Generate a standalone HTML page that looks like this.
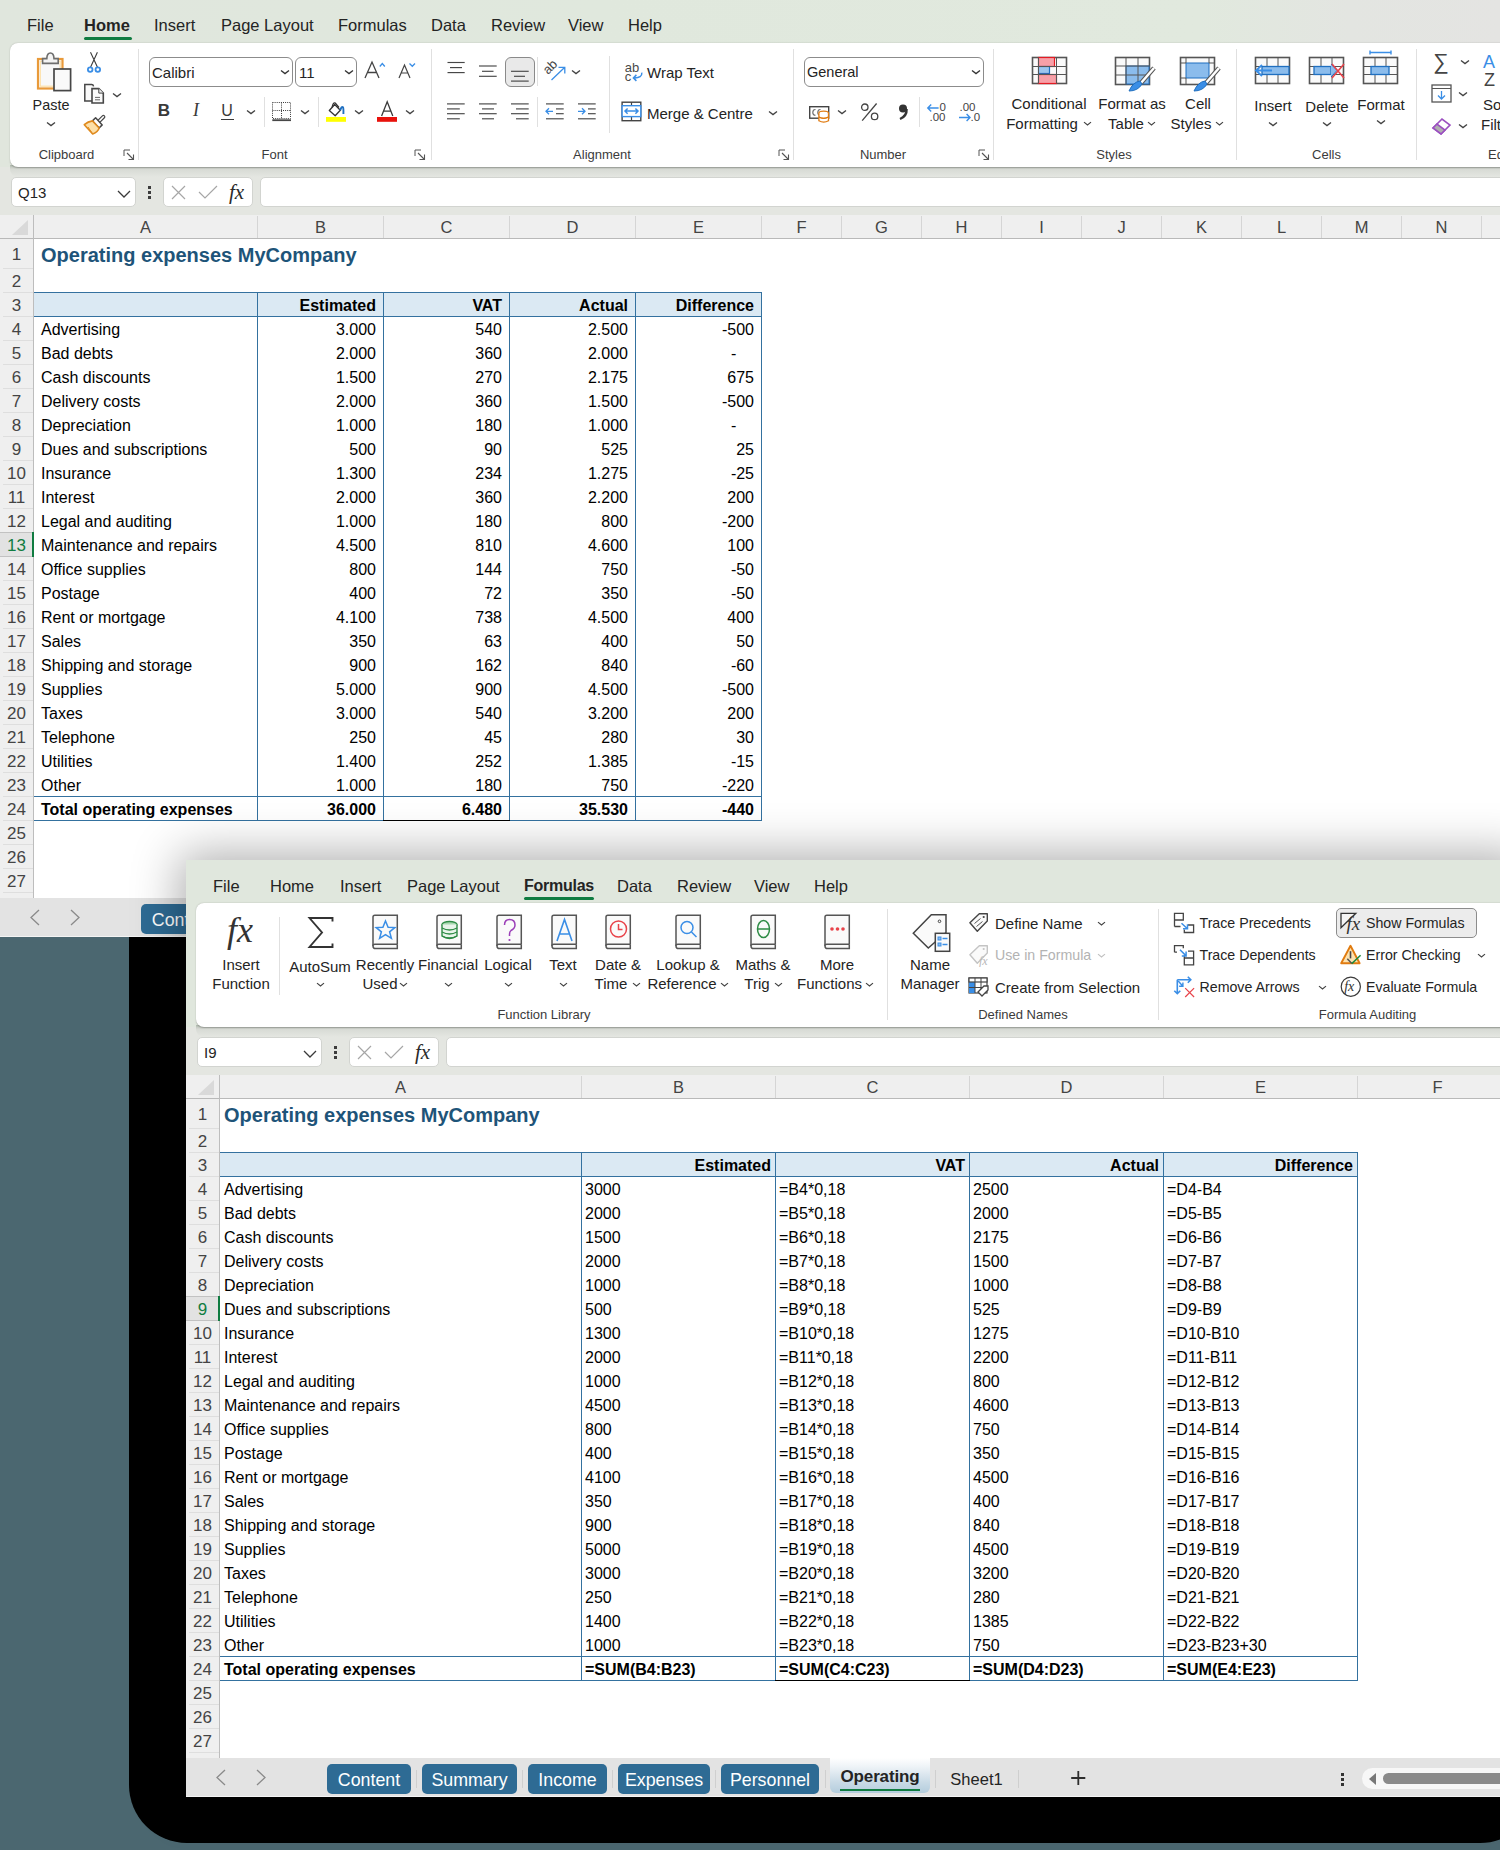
<!DOCTYPE html>
<html><head><meta charset="utf-8"><style>
html,body{margin:0;padding:0}
body{width:1500px;height:1850px;position:relative;overflow:hidden;background:#4b6770;font-family:"Liberation Sans", sans-serif}
.w{position:absolute;overflow:hidden}
</style></head><body>
<div style="position:absolute;left:129px;top:700px;width:1409px;height:1143px;background:#000;border-radius:0 0 58px 58px"></div>
<div class="w" style="left:0;top:0;width:1500px;height:937px"><div style="position:absolute;left:0px;top:0px;width:1500px;height:167px;background:linear-gradient(90deg,#e0e6dd 0%,#e0e8dd 40%,#e1e9de 80%,#e3e5e1 90%,#e4e4e2 100%)"></div><div style="position:absolute;left:0px;top:167px;width:1600px;height:48px;background:#e4e6e1"></div><div style="position:absolute;left:27px;top:13.50px;height:23px;line-height:23px;font-size:16.5px;font-weight:400;color:#242424;white-space:nowrap;">File</div><div style="position:absolute;left:84px;top:13.50px;height:23px;line-height:23px;font-size:16.5px;font-weight:700;color:#242424;white-space:nowrap;letter-spacing:0;">Home</div><div style="position:absolute;left:84px;top:37px;width:48px;height:3px;background:#107c41;border-radius:1.5px"></div><div style="position:absolute;left:154px;top:13.50px;height:23px;line-height:23px;font-size:16.5px;font-weight:400;color:#242424;white-space:nowrap;">Insert</div><div style="position:absolute;left:221px;top:13.50px;height:23px;line-height:23px;font-size:16.5px;font-weight:400;color:#242424;white-space:nowrap;">Page Layout</div><div style="position:absolute;left:338px;top:13.50px;height:23px;line-height:23px;font-size:16.5px;font-weight:400;color:#242424;white-space:nowrap;">Formulas</div><div style="position:absolute;left:431px;top:13.50px;height:23px;line-height:23px;font-size:16.5px;font-weight:400;color:#242424;white-space:nowrap;">Data</div><div style="position:absolute;left:491px;top:13.50px;height:23px;line-height:23px;font-size:16.5px;font-weight:400;color:#242424;white-space:nowrap;">Review</div><div style="position:absolute;left:568px;top:13.50px;height:23px;line-height:23px;font-size:16.5px;font-weight:400;color:#242424;white-space:nowrap;">View</div><div style="position:absolute;left:628px;top:13.50px;height:23px;line-height:23px;font-size:16.5px;font-weight:400;color:#242424;white-space:nowrap;">Help</div><div style="position:absolute;left:10px;top:165px;width:1600px;height:12px;background:linear-gradient(rgba(120,130,118,0.45),rgba(160,168,158,0.18) 35%,rgba(200,205,198,0) 100%);border-radius:0 0 0 8px"></div><div style="position:absolute;left:10px;top:43px;width:1600px;height:124px;background:#fff;border-radius:8px;box-shadow:0 0.5px 1.5px rgba(0,0,0,0.25)"></div><svg style="position:absolute;left:30px;top:48px" width="100" height="92" viewBox="0 0 100 92" fill="none"><rect x="8" y="11" width="24.5" height="29.5" fill="#f8f8f8" stroke="#e99a3a" stroke-width="2.2"/><rect x="10.3" y="13.3" width="19.9" height="24.9" fill="none" stroke="#fde0a8" stroke-width="1.2"/><path d="M12.6 15.4 V10.6 H16.8 Q17 5 20.4 5 Q23.8 5 24 10.6 H28.2 V15.4 Z" fill="#f3f3f3" stroke="#6e6e6e" stroke-width="1.6"/><rect x="24" y="21" width="16.6" height="21.6" fill="#fafafa" stroke="#474747" stroke-width="1.7"/><path d="M60.5 4.3 L67.6 19.6 M67.4 4.3 L60.4 19.6" stroke="#3c3c3c" stroke-width="1.1"/><circle cx="60.2" cy="21.6" r="2.3" stroke="#3a8ee6" stroke-width="1.8"/><circle cx="67.8" cy="21.6" r="2.3" stroke="#3a8ee6" stroke-width="1.8"/><path d="M62 53 H54.8 V36.6 H61.6 Q63.2 36.6 63.6 38.4" fill="#fafafa" stroke="#474747" stroke-width="1.5"/><path d="M62 55 V40.6 H68.8 L73.3 45.1 V55 Z" fill="#fafafa" stroke="#474747" stroke-width="1.6"/><path d="M68.8 40.6 V45.1 H73.3" stroke="#474747" stroke-width="1" fill="#eee"/><path d="M65 49.4 H70 M65 51.8 H70" stroke="#666" stroke-width="1"/><path d="M68.6 73.6 L73.4 68.8" stroke="#474747" stroke-width="4" stroke-linecap="round"/><path d="M68.6 73.6 L73.4 68.8" stroke="#fff" stroke-width="1.6" stroke-linecap="round"/><path d="M62.5 72.9 L65.6 69.8 L72.2 76.9 L69.1 80 Z" fill="#fff" stroke="#474747" stroke-width="1.5" stroke-linejoin="round"/><path d="M54.3 76.7 Q58 73.6 62.5 72.9 L69.1 80 Q68 84 62.7 86 Z" fill="#fde0a8" stroke="#e08a1e" stroke-width="1.6" stroke-linejoin="round"/><path d="M58 79 L62.7 86" stroke="#e08a1e" stroke-width="1"/></svg><div style="position:absolute;left:-249px;width:600px;text-align:center;top:94.50px;height:20px;line-height:20px;font-size:14.4px;font-weight:400;color:#242424;white-space:nowrap;">Paste</div><svg style="position:absolute;left:45.5px;top:119.5px" width="10" height="8" viewBox="0 0 10 8" fill="none" stroke-linecap="butt"><path d="M1 2.4 L5 5.6 L9 2.4" stroke="#424242" stroke-width="1.3"/></svg><svg style="position:absolute;left:112px;top:90.5px" width="10" height="8" viewBox="0 0 10 8" fill="none" stroke-linecap="butt"><path d="M1 2.4 L5 5.6 L9 2.4" stroke="#424242" stroke-width="1.3"/></svg><div style="position:absolute;left:-233.5px;width:600px;text-align:center;top:145.50px;height:18px;line-height:18px;font-size:13px;font-weight:400;color:#3b3b3b;white-space:nowrap;">Clipboard</div><svg style="position:absolute;left:123px;top:149px" width="12" height="12" viewBox="0 0 12 12" fill="none" stroke-linecap="butt"><path d="M1 7 V1 H7" stroke="#555" stroke-width="1"/><path d="M4 4 L10.5 10.5 M10.5 5.5 V10.5 H5.5" stroke="#555" stroke-width="1.1"/></svg><div style="position:absolute;left:138px;top:49px;width:1px;height:111px;background:#e0e0e0"></div><div style="position:absolute;left:149px;top:57px;width:144px;height:30px;border:1px solid #8c8c8c;border-radius:6px;box-sizing:border-box;background:#fff"></div><div style="position:absolute;left:152px;top:61.50px;height:21px;line-height:21px;font-size:15px;font-weight:400;color:#242424;white-space:nowrap;">Calibri</div><svg style="position:absolute;left:280px;top:68px" width="10" height="8" viewBox="0 0 10 8" fill="none" stroke-linecap="butt"><path d="M1 2.4 L5 5.6 L9 2.4" stroke="#333" stroke-width="1.3"/></svg><div style="position:absolute;left:295px;top:57px;width:62px;height:30px;border:1px solid #8c8c8c;border-radius:6px;box-sizing:border-box;background:#fff"></div><div style="position:absolute;left:299px;top:61.50px;height:21px;line-height:21px;font-size:15px;font-weight:400;color:#242424;white-space:nowrap;">11</div><svg style="position:absolute;left:344px;top:68px" width="10" height="8" viewBox="0 0 10 8" fill="none" stroke-linecap="butt"><path d="M1 2.4 L5 5.6 L9 2.4" stroke="#333" stroke-width="1.3"/></svg><svg style="position:absolute;left:360px;top:58px" width="60" height="24" viewBox="0 0 60 24" fill="none" stroke-linecap="butt"><path d="M5 20 L12 4 L19 20 M7.6 14.5 H16.4" stroke="#444" stroke-width="1.3" fill="none"/><path d="M19.8 8.5 L22.3 5.5 L24.8 8.5" stroke="#3a8ee6" stroke-width="1.3" fill="none"/><path d="M39 20 L44.5 7 L50 20 M41 15 H48" stroke="#444" stroke-width="1.2" fill="none"/><path d="M49.5 5.5 L52.3 8.3 L55 5.5" stroke="#3a8ee6" stroke-width="1.3" fill="none"/></svg><div style="position:absolute;left:-136px;width:600px;text-align:center;top:99.00px;height:23px;line-height:23px;font-size:17px;font-weight:700;color:#3a3a3a;white-space:nowrap;">B</div><div style="position:absolute;left:-104px;width:600px;text-align:center;top:98.00px;height:25px;line-height:25px;font-size:18px;font-weight:400;color:#3a3a3a;white-space:nowrap;font-family:'Liberation Serif',serif;font-style:italic;">I</div><div style="position:absolute;left:-73px;width:600px;text-align:center;top:100.00px;height:22px;line-height:22px;font-size:16px;font-weight:400;color:#3a3a3a;white-space:nowrap;">U</div><div style="position:absolute;left:221px;top:119px;width:13px;height:1.3px;background:#3a3a3a"></div><svg style="position:absolute;left:246px;top:108px" width="10" height="8" viewBox="0 0 10 8" fill="none" stroke-linecap="butt"><path d="M1 2.4 L5 5.6 L9 2.4" stroke="#424242" stroke-width="1.3"/></svg><div style="position:absolute;left:264px;top:97px;width:1px;height:30px;background:#e0e0e0"></div><svg style="position:absolute;left:272px;top:102px" width="20" height="20" viewBox="0 0 20 20" fill="none" stroke-linecap="butt"><path d="M0.5 0.5 H18.5 V16.5 H0.5 Z M9.5 0.5 V16.5 M0.5 8.5 H18.5" stroke="#3a3a3a" stroke-width="1" stroke-dasharray="1 1.1"/><path d="M0.3 18.2 H19" stroke="#474747" stroke-width="1.8"/></svg><svg style="position:absolute;left:300px;top:108px" width="10" height="8" viewBox="0 0 10 8" fill="none" stroke-linecap="butt"><path d="M1 2.4 L5 5.6 L9 2.4" stroke="#424242" stroke-width="1.3"/></svg><div style="position:absolute;left:318px;top:97px;width:1px;height:30px;background:#e0e0e0"></div><svg style="position:absolute;left:325px;top:100px" width="24" height="24" viewBox="0 0 24 24" fill="none" stroke-linecap="butt"><path d="M4.3 10.5 L9.7 4.5 L15.3 10.3 L10.2 15.8 Z" fill="#fff" stroke="#333" stroke-width="1.3" stroke-linejoin="round"/><path d="M7 7.5 Q8 1.8 10.3 3 L14 7.5" stroke="#333" stroke-width="1.2" fill="none"/><path d="M15.3 10.3 Q16.5 6 18 7.2 Q18.6 8 18.4 14" stroke="#1f6fc0" stroke-width="1.9" fill="none"/><rect x="1" y="17" width="20" height="4.8" fill="#ffff00"/></svg><svg style="position:absolute;left:354px;top:108px" width="10" height="8" viewBox="0 0 10 8" fill="none" stroke-linecap="butt"><path d="M1 2.4 L5 5.6 L9 2.4" stroke="#424242" stroke-width="1.3"/></svg><svg style="position:absolute;left:376px;top:100px" width="22" height="23" viewBox="0 0 22 23" fill="none" stroke-linecap="butt"><path d="M5.6 16 L11.2 1.8 L16.8 16 M7.6 11.2 H14.8" stroke="#3a3a3a" stroke-width="1.3" fill="none"/><rect x="1" y="17" width="20" height="4.8" fill="#e8120c"/></svg><svg style="position:absolute;left:405px;top:108px" width="10" height="8" viewBox="0 0 10 8" fill="none" stroke-linecap="butt"><path d="M1 2.4 L5 5.6 L9 2.4" stroke="#424242" stroke-width="1.3"/></svg><div style="position:absolute;left:-25.5px;width:600px;text-align:center;top:145.50px;height:18px;line-height:18px;font-size:13px;font-weight:400;color:#3b3b3b;white-space:nowrap;">Font</div><svg style="position:absolute;left:414px;top:149px" width="12" height="12" viewBox="0 0 12 12" fill="none" stroke-linecap="butt"><path d="M1 7 V1 H7" stroke="#555" stroke-width="1"/><path d="M4 4 L10.5 10.5 M10.5 5.5 V10.5 H5.5" stroke="#555" stroke-width="1.1"/></svg><div style="position:absolute;left:431px;top:49px;width:1px;height:111px;background:#e0e0e0"></div><svg style="position:absolute;left:440px;top:55px" width="160" height="75" viewBox="0 0 160 75" fill="none"><path d="M7.5 7.5 H24.7" stroke="#474747" stroke-width="1.15"/><path d="M10.0 12.6 H22.0" stroke="#474747" stroke-width="1.15"/><path d="M7.5 17.6 H24.7" stroke="#474747" stroke-width="1.15"/><path d="M39.0 11.0 H56.7" stroke="#474747" stroke-width="1.15"/><path d="M42.0 16.3 H53.5" stroke="#474747" stroke-width="1.15"/><path d="M39.0 21.3 H56.7" stroke="#474747" stroke-width="1.15"/><path d="M71.0 16.3 H88.7" stroke="#474747" stroke-width="1.15"/><path d="M74.0 21.3 H85.0" stroke="#474747" stroke-width="1.15"/><path d="M71.0 26.1 H88.7" stroke="#474747" stroke-width="1.15"/><path d="M7.0 48.9 H24.7" stroke="#474747" stroke-width="1.15"/><path d="M7.0 53.9 H19.8" stroke="#474747" stroke-width="1.15"/><path d="M7.0 58.7 H24.7" stroke="#474747" stroke-width="1.15"/><path d="M7.0 63.8 H19.8" stroke="#474747" stroke-width="1.15"/><path d="M39.0 48.9 H56.7" stroke="#474747" stroke-width="1.15"/><path d="M42.0 53.9 H54.0" stroke="#474747" stroke-width="1.15"/><path d="M39.0 58.7 H56.7" stroke="#474747" stroke-width="1.15"/><path d="M42.0 63.8 H54.0" stroke="#474747" stroke-width="1.15"/><path d="M71.0 48.9 H88.7" stroke="#474747" stroke-width="1.15"/><path d="M76.0 53.9 H88.7" stroke="#474747" stroke-width="1.15"/><path d="M71.0 58.7 H88.7" stroke="#474747" stroke-width="1.15"/><path d="M76.0 63.8 H88.7" stroke="#474747" stroke-width="1.15"/><path d="M106.0 48.9 H123.7" stroke="#474747" stroke-width="1.15"/><path d="M116.0 53.9 H123.7" stroke="#474747" stroke-width="1.15"/><path d="M116.0 58.7 H123.7" stroke="#474747" stroke-width="1.15"/><path d="M106.0 63.8 H123.7" stroke="#474747" stroke-width="1.15"/><path d="M138.0 48.9 H155.7" stroke="#474747" stroke-width="1.15"/><path d="M148.0 53.9 H155.7" stroke="#474747" stroke-width="1.15"/><path d="M148.0 58.7 H155.7" stroke="#474747" stroke-width="1.15"/><path d="M138.0 63.8 H155.7" stroke="#474747" stroke-width="1.15"/><path d="M113 56.3 H106 M109 53.3 L106 56.3 L109 59.3" stroke="#3a8ee6" stroke-width="1.3" fill="none"/><path d="M138 56.3 H145 M142 53.3 L145 56.3 L142 59.3" stroke="#3a8ee6" stroke-width="1.3" fill="none"/><text x="0" y="0" font-family="Liberation Sans" font-size="13" fill="#474747" transform="translate(108 20) rotate(-45)">ab</text><path d="M111.5 25 L124.8 12.3 M118.5 12.3 H124.8 V18.6" stroke="#3a8ee6" stroke-width="1.3" fill="none"/></svg><div style="position:absolute;left:505px;top:57px;width:30px;height:30px;background:#e9e9e9;border:1px solid #8a8a8a;border-radius:6px;box-sizing:border-box"></div><svg style="position:absolute;left:440px;top:55px" width="160" height="75" viewBox="0 0 160 75" fill="none"><path d="M71.0 16.3 H88.7" stroke="#474747" stroke-width="1.15"/><path d="M74.0 21.3 H85.0" stroke="#474747" stroke-width="1.15"/><path d="M71.0 26.1 H88.7" stroke="#474747" stroke-width="1.15"/></svg><div style="position:absolute;left:537px;top:57px;width:1px;height:29px;background:#e0e0e0"></div><svg style="position:absolute;left:571px;top:68px" width="10" height="8" viewBox="0 0 10 8" fill="none" stroke-linecap="butt"><path d="M1 2.4 L5 5.6 L9 2.4" stroke="#424242" stroke-width="1.3"/></svg><div style="position:absolute;left:537px;top:97px;width:1px;height:30px;background:#e0e0e0"></div><div style="position:absolute;left:609px;top:56px;width:1px;height:77px;background:#e0e0e0"></div><svg style="position:absolute;left:620px;top:58px" width="24" height="26" viewBox="0 0 24 26" fill="none" stroke-linecap="butt"><text x="4.8" y="14" font-family="Liberation Sans" font-size="13" fill="#4a4a4a">ab</text><text x="4.8" y="23.3" font-family="Liberation Sans" font-size="13" fill="#4a4a4a">c</text><path d="M21.8 14.6 Q22.4 20.2 13.8 19.9 M16.4 16.9 L13.4 19.9 L16.4 22.9" stroke="#3a8ee6" stroke-width="1.5" fill="none"/></svg><div style="position:absolute;left:647px;top:62.00px;height:21px;line-height:21px;font-size:15px;font-weight:400;color:#242424;white-space:nowrap;">Wrap Text</div><svg style="position:absolute;left:620px;top:100px" width="23" height="23" viewBox="0 0 23 23" fill="none" stroke-linecap="butt"><rect x="2.1" y="2.2" width="18.7" height="18.5" stroke="#444" stroke-width="1.4" fill="#fff"/><path d="M11.5 2.2 V5.7 M11.5 16.6 V20.7" stroke="#444" stroke-width="1.2"/><rect x="2.1" y="5.7" width="18.7" height="10.9" stroke="#3a8ee6" stroke-width="1.4" fill="#fff"/><path d="M5 11.1 H18 M7.6 8.5 L5 11.1 L7.6 13.7 M15.4 8.5 L18 11.1 L15.4 13.7" stroke="#3a8ee6" stroke-width="1.5" fill="none"/></svg><div style="position:absolute;left:647px;top:102.50px;height:21px;line-height:21px;font-size:15px;font-weight:400;color:#242424;white-space:nowrap;">Merge &amp; Centre</div><svg style="position:absolute;left:767.5px;top:109px" width="10" height="8" viewBox="0 0 10 8" fill="none" stroke-linecap="butt"><path d="M1 2.4 L5 5.6 L9 2.4" stroke="#424242" stroke-width="1.3"/></svg><div style="position:absolute;left:302px;width:600px;text-align:center;top:145.50px;height:18px;line-height:18px;font-size:13px;font-weight:400;color:#3b3b3b;white-space:nowrap;">Alignment</div><svg style="position:absolute;left:778px;top:149px" width="12" height="12" viewBox="0 0 12 12" fill="none" stroke-linecap="butt"><path d="M1 7 V1 H7" stroke="#555" stroke-width="1"/><path d="M4 4 L10.5 10.5 M10.5 5.5 V10.5 H5.5" stroke="#555" stroke-width="1.1"/></svg><div style="position:absolute;left:793px;top:49px;width:1px;height:111px;background:#e0e0e0"></div><div style="position:absolute;left:804px;top:57px;width:180px;height:30px;border:1px solid #8c8c8c;border-radius:6px;box-sizing:border-box;background:#fff"></div><div style="position:absolute;left:807px;top:62.00px;height:20px;line-height:20px;font-size:14.5px;font-weight:400;color:#242424;white-space:nowrap;">General</div><svg style="position:absolute;left:971px;top:68px" width="10" height="8" viewBox="0 0 10 8" fill="none" stroke-linecap="butt"><path d="M1 2.4 L5 5.6 L9 2.4" stroke="#333" stroke-width="1.3"/></svg><svg style="position:absolute;left:806px;top:101px" width="26" height="24" viewBox="0 0 26 24" fill="none" stroke-linecap="butt"><rect x="3.7" y="5.7" width="19" height="11.5" stroke="#444" stroke-width="1.4" fill="#fff"/><path d="M9.5 8.5 Q6.8 8.5 6.8 11.4 Q6.8 14.3 9.5 14.3 M14.5 8.5 Q11.8 8.5 11.8 11.4 Q11.8 14.3 14.5 14.3" stroke="#666" stroke-width="1.1" fill="none"/><ellipse cx="17.7" cy="12.2" rx="4.8" ry="2" fill="#fff" stroke="#e07b10" stroke-width="1.3"/><path d="M12.9 12.2 V19.8 Q17.7 22.4 22.5 19.8 V12.2 M12.9 16 Q17.7 18.6 22.5 16" stroke="#e07b10" stroke-width="1.3" fill="#fff"/><path d="M12.9 16 Q17.7 18.6 22.5 16" stroke="#e07b10" stroke-width="1.3" fill="none"/></svg><svg style="position:absolute;left:837px;top:108px" width="10" height="8" viewBox="0 0 10 8" fill="none" stroke-linecap="butt"><path d="M1 2.4 L5 5.6 L9 2.4" stroke="#424242" stroke-width="1.3"/></svg><svg style="position:absolute;left:859px;top:102px" width="22" height="20" viewBox="0 0 22 20" fill="none" stroke-linecap="butt"><circle cx="5.8" cy="5.2" r="3.2" stroke="#444" stroke-width="1.3"/><circle cx="15.6" cy="14.4" r="3.2" stroke="#444" stroke-width="1.3"/><path d="M17.6 1.5 L3.2 18.7" stroke="#444" stroke-width="1.3"/></svg><svg style="position:absolute;left:897px;top:103px" width="12" height="18" viewBox="0 0 12 18" fill="none" stroke-linecap="butt"><circle cx="6" cy="5.5" r="4" fill="#333"/><path d="M9.6 6 Q10 13 3 16" stroke="#333" stroke-width="2.4" fill="none"/></svg><div style="position:absolute;left:919px;top:97px;width:1px;height:30px;background:#e0e0e0"></div><svg style="position:absolute;left:926px;top:100px" width="24" height="24" viewBox="0 0 24 24" fill="none" stroke-linecap="butt"><text x="13.5" y="11" font-family="Liberation Sans" font-size="11.5" fill="#444">0</text><text x="3.5" y="21" font-family="Liberation Sans" font-size="11.5" fill="#444">.00</text><path d="M1.8 8 H12.6 M5.2 4.6 L1.8 8 L5.2 11.4" stroke="#3a8ee6" stroke-width="1.4" fill="none"/></svg><svg style="position:absolute;left:957px;top:100px" width="24" height="24" viewBox="0 0 24 24" fill="none" stroke-linecap="butt"><text x="2.5" y="11" font-family="Liberation Sans" font-size="11.5" fill="#444">.00</text><text x="13.5" y="21" font-family="Liberation Sans" font-size="11.5" fill="#444">.0</text><path d="M2 17.5 H13 M9.6 14.1 L13 17.5 L9.6 20.9" stroke="#3a8ee6" stroke-width="1.4" fill="none"/></svg><div style="position:absolute;left:583px;width:600px;text-align:center;top:145.50px;height:18px;line-height:18px;font-size:13px;font-weight:400;color:#3b3b3b;white-space:nowrap;">Number</div><svg style="position:absolute;left:978px;top:149px" width="12" height="12" viewBox="0 0 12 12" fill="none" stroke-linecap="butt"><path d="M1 7 V1 H7" stroke="#555" stroke-width="1"/><path d="M4 4 L10.5 10.5 M10.5 5.5 V10.5 H5.5" stroke="#555" stroke-width="1.1"/></svg><div style="position:absolute;left:993px;top:49px;width:1px;height:111px;background:#e0e0e0"></div><svg style="position:absolute;left:1031px;top:56px" width="38" height="31" viewBox="0 0 38 31" fill="none" stroke-linecap="butt"><rect x="1.5" y="1.5" width="34" height="26" stroke="#555" stroke-width="1.6" fill="#fafafa"/><rect x="7.5" y="1.5" width="16" height="9" fill="#f7a0a8" stroke="#e31b23" stroke-width="1.2"/><rect x="7.5" y="10.5" width="11" height="7" fill="#9ec6ee" stroke="#1f6fc0" stroke-width="1.2"/><rect x="7.5" y="18.5" width="18" height="9" fill="#f7a0a8" stroke="#e31b23" stroke-width="1.2"/><path d="M1.5 10.5 H35.5 M1.5 18.5 H35.5 M7.5 1.5 V27.5 M25.5 1.5 V27.5" stroke="#555" stroke-width="1"/></svg><div style="position:absolute;left:749px;width:600px;text-align:center;top:92.80px;height:21px;line-height:21px;font-size:15px;font-weight:400;color:#242424;white-space:nowrap;">Conditional</div><div style="position:absolute;left:742px;width:600px;text-align:center;top:112.50px;height:21px;line-height:21px;font-size:15px;font-weight:400;color:#242424;white-space:nowrap;">Formatting</div><svg style="position:absolute;left:1082.5px;top:120.0px" width="9.0" height="7.0" viewBox="0 0 9.0 7.0" fill="none" stroke-linecap="butt"><path d="M1 2.1 L4.5 4.9 L8.0 2.1" stroke="#424242" stroke-width="1.2"/></svg><svg style="position:absolute;left:1114px;top:56px" width="42" height="36" viewBox="0 0 42 36" fill="none" stroke-linecap="butt"><rect x="1.5" y="1.5" width="34" height="27" stroke="#555" stroke-width="1.6" fill="#fafafa"/><rect x="12" y="10" width="23" height="18" fill="#8bbcec" stroke="#1f6fc0" stroke-width="1"/><path d="M1.5 10 H35.5 M1.5 19 H35.5 M12 1.5 V28.5 M24 1.5 V28.5" stroke="#555" stroke-width="1"/><path d="M40 12 L27 27" stroke="#555" stroke-width="4.5"/><path d="M40 12 L27 27" stroke="#fff" stroke-width="2.5"/><path d="M26 25 Q19 26 15 35 Q24 35 28 28 Z" fill="#3a8ee6" stroke="#1f6fc0" stroke-width="1"/></svg><div style="position:absolute;left:832px;width:600px;text-align:center;top:92.80px;height:21px;line-height:21px;font-size:15px;font-weight:400;color:#242424;white-space:nowrap;">Format as</div><div style="position:absolute;left:826px;width:600px;text-align:center;top:112.50px;height:21px;line-height:21px;font-size:15px;font-weight:400;color:#242424;white-space:nowrap;">Table</div><svg style="position:absolute;left:1146.5px;top:120.0px" width="9.0" height="7.0" viewBox="0 0 9.0 7.0" fill="none" stroke-linecap="butt"><path d="M1 2.1 L4.5 4.9 L8.0 2.1" stroke="#424242" stroke-width="1.2"/></svg><svg style="position:absolute;left:1179px;top:56px" width="42" height="36" viewBox="0 0 42 36" fill="none" stroke-linecap="butt"><rect x="1.5" y="1.5" width="34" height="27" stroke="#555" stroke-width="1.6" fill="#fafafa"/><rect x="7" y="7" width="23" height="15" fill="#8bbcec" stroke="#1f6fc0" stroke-width="1"/><path d="M1.5 7 H7 M30 7 H35.5 M1.5 22 H7 M7 1.5 V7 M30 1.5 V7 M7 22 V28.5" stroke="#555" stroke-width="1"/><path d="M40 12 L27 27" stroke="#555" stroke-width="4.5"/><path d="M40 12 L27 27" stroke="#fff" stroke-width="2.5"/><path d="M26 25 Q19 26 15 35 Q24 35 28 28 Z" fill="#3a8ee6" stroke="#1f6fc0" stroke-width="1"/></svg><div style="position:absolute;left:898px;width:600px;text-align:center;top:92.80px;height:21px;line-height:21px;font-size:15px;font-weight:400;color:#242424;white-space:nowrap;">Cell</div><div style="position:absolute;left:891px;width:600px;text-align:center;top:112.50px;height:21px;line-height:21px;font-size:15px;font-weight:400;color:#242424;white-space:nowrap;">Styles</div><svg style="position:absolute;left:1214.5px;top:120.0px" width="9.0" height="7.0" viewBox="0 0 9.0 7.0" fill="none" stroke-linecap="butt"><path d="M1 2.1 L4.5 4.9 L8.0 2.1" stroke="#424242" stroke-width="1.2"/></svg><div style="position:absolute;left:814px;width:600px;text-align:center;top:145.50px;height:18px;line-height:18px;font-size:13px;font-weight:400;color:#3b3b3b;white-space:nowrap;">Styles</div><div style="position:absolute;left:1236px;top:49px;width:1px;height:111px;background:#e0e0e0"></div><svg style="position:absolute;left:1254px;top:56px" width="40" height="30" viewBox="0 0 40 30" fill="none" stroke-linecap="butt"><rect x="1.5" y="1.5" width="34" height="26" stroke="#555" stroke-width="1.6" fill="#fafafa"/><path d="M1.5 10.5 H35.5 M1.5 18.5 H35.5 M13 1.5 V27.5 M24 1.5 V27.5" stroke="#555" stroke-width="1"/><rect x="8" y="10.5" width="27" height="8" fill="#8bbcec" stroke="#1f6fc0" stroke-width="1.3"/><path d="M18 14.5 H3 M8 9 L2 14.5 L8 20" stroke="#3a8ee6" stroke-width="1.8"/></svg><div style="position:absolute;left:973px;width:600px;text-align:center;top:95.00px;height:21px;line-height:21px;font-size:15px;font-weight:400;color:#242424;white-space:nowrap;">Insert</div><svg style="position:absolute;left:1268px;top:120px" width="10" height="8" viewBox="0 0 10 8" fill="none" stroke-linecap="butt"><path d="M1 2.4 L5 5.6 L9 2.4" stroke="#424242" stroke-width="1.3"/></svg><svg style="position:absolute;left:1308px;top:56px" width="40" height="30" viewBox="0 0 40 30" fill="none" stroke-linecap="butt"><rect x="1.5" y="1.5" width="34" stroke-dasharray="0" height="26" stroke="#555" stroke-width="1.6" fill="#fafafa"/><path d="M1.5 10.5 H35.5 M1.5 18.5 H35.5 M13 1.5 V27.5 M24 1.5 V27.5" stroke="#555" stroke-width="1"/><rect x="6" y="10.5" width="17" height="8" fill="#8bbcec" stroke="#1f6fc0" stroke-width="1.3"/><path d="M23 8 L29 14.5 L23 21" fill="#8bbcec" stroke="#1f6fc0" stroke-width="1"/><path d="M24 8 L36 22 M36 8 L24 22" stroke="#e8434a" stroke-width="1.6"/></svg><div style="position:absolute;left:1027px;width:600px;text-align:center;top:95.50px;height:21px;line-height:21px;font-size:15px;font-weight:400;color:#242424;white-space:nowrap;">Delete</div><svg style="position:absolute;left:1322px;top:120px" width="10" height="8" viewBox="0 0 10 8" fill="none" stroke-linecap="butt"><path d="M1 2.4 L5 5.6 L9 2.4" stroke="#424242" stroke-width="1.3"/></svg><svg style="position:absolute;left:1362px;top:50px" width="38" height="36" viewBox="0 0 38 36" fill="none" stroke-linecap="butt"><path d="M8 2.5 H29 M8 0.5 V4.5 M29 0.5 V4.5" stroke="#3a8ee6" stroke-width="1.4"/><g transform="translate(0,6)"><rect x="1.5" y="1.5" width="34" height="26" stroke="#555" stroke-width="1.6" fill="#fafafa"/><path d="M1.5 10.5 H35.5 M1.5 18.5 H35.5 M13 1.5 V27.5 M24 1.5 V27.5" stroke="#555" stroke-width="1"/><rect x="9" y="10.5" width="18" height="8" fill="#8bbcec" stroke="#1f6fc0" stroke-width="1.3"/></g></svg><div style="position:absolute;left:1081px;width:600px;text-align:center;top:93.50px;height:21px;line-height:21px;font-size:15px;font-weight:400;color:#242424;white-space:nowrap;">Format</div><svg style="position:absolute;left:1376px;top:118px" width="10" height="8" viewBox="0 0 10 8" fill="none" stroke-linecap="butt"><path d="M1 2.4 L5 5.6 L9 2.4" stroke="#424242" stroke-width="1.3"/></svg><div style="position:absolute;left:1026.5px;width:600px;text-align:center;top:145.50px;height:18px;line-height:18px;font-size:13px;font-weight:400;color:#3b3b3b;white-space:nowrap;">Cells</div><div style="position:absolute;left:1416px;top:49px;width:1px;height:111px;background:#e0e0e0"></div><div style="position:absolute;left:1141px;width:600px;text-align:center;top:47.00px;height:30px;line-height:30px;font-size:22px;font-weight:400;color:#444;white-space:nowrap;">&#x2211;</div><svg style="position:absolute;left:1460px;top:58px" width="10" height="8" viewBox="0 0 10 8" fill="none" stroke-linecap="butt"><path d="M1 2.4 L5 5.6 L9 2.4" stroke="#424242" stroke-width="1.3"/></svg><svg style="position:absolute;left:1431px;top:84px" width="22" height="20" viewBox="0 0 22 20" fill="none" stroke-linecap="butt"><rect x="1" y="1" width="19" height="17" stroke="#555" stroke-width="1.3" fill="#fff"/><path d="M1 4.5 H20" stroke="#555" stroke-width="1"/><path d="M10.5 7 V15 M7 11.5 L10.5 15 L14 11.5" stroke="#3a8ee6" stroke-width="1.3"/></svg><svg style="position:absolute;left:1458px;top:90px" width="10" height="8" viewBox="0 0 10 8" fill="none" stroke-linecap="butt"><path d="M1 2.4 L5 5.6 L9 2.4" stroke="#424242" stroke-width="1.3"/></svg><svg style="position:absolute;left:1431px;top:116px" width="22" height="20" viewBox="0 0 22 20" fill="none" stroke-linecap="butt"><path d="M2 12 L11 3 L19 9 L10 18 Z" fill="#fff" stroke="#9b4fc0" stroke-width="1.6"/><path d="M2 12 L6 8 L14 14 L10 18 Z" fill="#b0b0b0" stroke="#9b4fc0" stroke-width="1.6"/></svg><svg style="position:absolute;left:1458px;top:122px" width="10" height="8" viewBox="0 0 10 8" fill="none" stroke-linecap="butt"><path d="M1 2.4 L5 5.6 L9 2.4" stroke="#424242" stroke-width="1.3"/></svg><div style="position:absolute;left:1483px;top:49.50px;height:25px;line-height:25px;font-size:18px;font-weight:400;color:#3a8ee6;white-space:nowrap;">A</div><div style="position:absolute;left:1484px;top:67.50px;height:25px;line-height:25px;font-size:18px;font-weight:400;color:#444;white-space:nowrap;">Z</div><div style="position:absolute;left:1483px;top:93.50px;height:21px;line-height:21px;font-size:15px;font-weight:400;color:#242424;white-space:nowrap;">So</div><div style="position:absolute;left:1481px;top:113.50px;height:21px;line-height:21px;font-size:15px;font-weight:400;color:#242424;white-space:nowrap;">Filt</div><div style="position:absolute;left:1488px;top:145.50px;height:18px;line-height:18px;font-size:13px;font-weight:400;color:#3b3b3b;white-space:nowrap;">Ed</div><div style="position:absolute;left:11px;top:177px;width:125px;height:30px;background:#fff;border:1px solid #d2d4d0;box-sizing:border-box;border-radius:5px"></div><div style="position:absolute;left:18px;top:181.50px;height:21px;line-height:21px;font-size:15px;font-weight:400;color:#242424;white-space:nowrap;">Q13</div><svg style="position:absolute;left:116px;top:187.5px" width="16" height="12" viewBox="0 0 16 12" fill="none" stroke-linecap="butt"><path d="M2 3 L8 9 L14 3" stroke="#3a3a3a" stroke-width="1.3"/></svg><div style="position:absolute;left:148px;top:186px;width:3px;height:3px;background:#3c3c3c"></div><div style="position:absolute;left:148px;top:191px;width:3px;height:3px;background:#3c3c3c"></div><div style="position:absolute;left:148px;top:196px;width:3px;height:3px;background:#3c3c3c"></div><div style="position:absolute;left:163px;top:177px;width:90px;height:30px;background:#fff;border:1px solid #d2d4d0;box-sizing:border-box;border-radius:5px"></div><svg style="position:absolute;left:171px;top:185px" width="15" height="15" viewBox="0 0 15 15" fill="none" stroke-linecap="butt"><path d="M1 1 L14 14 M14 1 L1 14" stroke="#a6a6a6" stroke-width="1.2"/></svg><svg style="position:absolute;left:198px;top:185px" width="20" height="14" viewBox="0 0 20 14" fill="none" stroke-linecap="butt"><path d="M1 7 L7 13 L19 1" stroke="#a6a6a6" stroke-width="1.2"/></svg><div style="position:absolute;left:229px;top:177.50px;height:29px;line-height:29px;font-size:21px;font-weight:400;color:#2a2a2a;white-space:nowrap;font-family:'Liberation Serif',serif;font-style:italic;">fx</div><div style="position:absolute;left:260px;top:177px;width:1300px;height:30px;background:#fff;border:1px solid #d2d4d0;box-sizing:border-box;border-radius:5px"></div><div style="position:absolute;left:0px;top:215px;width:1600px;height:23px;background:#efefef"></div><div style="position:absolute;left:0px;top:238px;width:1600px;height:1px;background:#b9b9b9"></div><svg style="position:absolute;left:8px;top:218px" width="22" height="18" viewBox="0 0 22 18" fill="none" stroke-linecap="butt"><path d="M20 2 L20 17 L4 17 Z" fill="#d9d9d9"/></svg><div style="position:absolute;left:0px;top:239px;width:33px;height:660px;background:#efefef"></div><div style="position:absolute;left:33px;top:215px;width:1px;height:684px;background:#bdbdbd"></div><div style="position:absolute;left:34px;top:239px;width:1600px;height:659px;background:#fff"></div><div style="position:absolute;left:-154.5px;width:600px;text-align:center;top:215.50px;height:23px;line-height:23px;font-size:16.5px;font-weight:400;color:#444;white-space:nowrap;">A</div><div style="position:absolute;left:257px;top:216px;width:1px;height:22px;background:#d5d5d5"></div><div style="position:absolute;left:20.5px;width:600px;text-align:center;top:215.50px;height:23px;line-height:23px;font-size:16.5px;font-weight:400;color:#444;white-space:nowrap;">B</div><div style="position:absolute;left:383px;top:216px;width:1px;height:22px;background:#d5d5d5"></div><div style="position:absolute;left:146.5px;width:600px;text-align:center;top:215.50px;height:23px;line-height:23px;font-size:16.5px;font-weight:400;color:#444;white-space:nowrap;">C</div><div style="position:absolute;left:509px;top:216px;width:1px;height:22px;background:#d5d5d5"></div><div style="position:absolute;left:272.5px;width:600px;text-align:center;top:215.50px;height:23px;line-height:23px;font-size:16.5px;font-weight:400;color:#444;white-space:nowrap;">D</div><div style="position:absolute;left:635px;top:216px;width:1px;height:22px;background:#d5d5d5"></div><div style="position:absolute;left:398.5px;width:600px;text-align:center;top:215.50px;height:23px;line-height:23px;font-size:16.5px;font-weight:400;color:#444;white-space:nowrap;">E</div><div style="position:absolute;left:761px;top:216px;width:1px;height:22px;background:#d5d5d5"></div><div style="position:absolute;left:501.5px;width:600px;text-align:center;top:215.50px;height:23px;line-height:23px;font-size:16.5px;font-weight:400;color:#444;white-space:nowrap;">F</div><div style="position:absolute;left:841px;top:216px;width:1px;height:22px;background:#d5d5d5"></div><div style="position:absolute;left:581.5px;width:600px;text-align:center;top:215.50px;height:23px;line-height:23px;font-size:16.5px;font-weight:400;color:#444;white-space:nowrap;">G</div><div style="position:absolute;left:921px;top:216px;width:1px;height:22px;background:#d5d5d5"></div><div style="position:absolute;left:661.5px;width:600px;text-align:center;top:215.50px;height:23px;line-height:23px;font-size:16.5px;font-weight:400;color:#444;white-space:nowrap;">H</div><div style="position:absolute;left:1001px;top:216px;width:1px;height:22px;background:#d5d5d5"></div><div style="position:absolute;left:741.5px;width:600px;text-align:center;top:215.50px;height:23px;line-height:23px;font-size:16.5px;font-weight:400;color:#444;white-space:nowrap;">I</div><div style="position:absolute;left:1081px;top:216px;width:1px;height:22px;background:#d5d5d5"></div><div style="position:absolute;left:821.5px;width:600px;text-align:center;top:215.50px;height:23px;line-height:23px;font-size:16.5px;font-weight:400;color:#444;white-space:nowrap;">J</div><div style="position:absolute;left:1161px;top:216px;width:1px;height:22px;background:#d5d5d5"></div><div style="position:absolute;left:901.5px;width:600px;text-align:center;top:215.50px;height:23px;line-height:23px;font-size:16.5px;font-weight:400;color:#444;white-space:nowrap;">K</div><div style="position:absolute;left:1241px;top:216px;width:1px;height:22px;background:#d5d5d5"></div><div style="position:absolute;left:981.5px;width:600px;text-align:center;top:215.50px;height:23px;line-height:23px;font-size:16.5px;font-weight:400;color:#444;white-space:nowrap;">L</div><div style="position:absolute;left:1321px;top:216px;width:1px;height:22px;background:#d5d5d5"></div><div style="position:absolute;left:1061.5px;width:600px;text-align:center;top:215.50px;height:23px;line-height:23px;font-size:16.5px;font-weight:400;color:#444;white-space:nowrap;">M</div><div style="position:absolute;left:1401px;top:216px;width:1px;height:22px;background:#d5d5d5"></div><div style="position:absolute;left:1141.5px;width:600px;text-align:center;top:215.50px;height:23px;line-height:23px;font-size:16.5px;font-weight:400;color:#444;white-space:nowrap;">N</div><div style="position:absolute;left:1481px;top:216px;width:1px;height:22px;background:#d5d5d5"></div><div style="position:absolute;left:1221.5px;width:600px;text-align:center;top:215.50px;height:23px;line-height:23px;font-size:16.5px;font-weight:400;color:#444;white-space:nowrap;">O</div><div style="position:absolute;left:3px;top:268px;width:30px;height:1px;background:#dedede"></div><div style="position:absolute;left:-283.5px;width:600px;text-align:center;top:242.50px;height:23px;line-height:23px;font-size:17px;font-weight:400;color:#444;white-space:nowrap;">1</div><div style="position:absolute;left:3px;top:292px;width:30px;height:1px;background:#dedede"></div><div style="position:absolute;left:-283.5px;width:600px;text-align:center;top:269.50px;height:23px;line-height:23px;font-size:17px;font-weight:400;color:#444;white-space:nowrap;">2</div><div style="position:absolute;left:3px;top:316px;width:30px;height:1px;background:#dedede"></div><div style="position:absolute;left:-283.5px;width:600px;text-align:center;top:293.50px;height:23px;line-height:23px;font-size:17px;font-weight:400;color:#444;white-space:nowrap;">3</div><div style="position:absolute;left:3px;top:340px;width:30px;height:1px;background:#dedede"></div><div style="position:absolute;left:-283.5px;width:600px;text-align:center;top:317.50px;height:23px;line-height:23px;font-size:17px;font-weight:400;color:#444;white-space:nowrap;">4</div><div style="position:absolute;left:3px;top:364px;width:30px;height:1px;background:#dedede"></div><div style="position:absolute;left:-283.5px;width:600px;text-align:center;top:341.50px;height:23px;line-height:23px;font-size:17px;font-weight:400;color:#444;white-space:nowrap;">5</div><div style="position:absolute;left:3px;top:388px;width:30px;height:1px;background:#dedede"></div><div style="position:absolute;left:-283.5px;width:600px;text-align:center;top:365.50px;height:23px;line-height:23px;font-size:17px;font-weight:400;color:#444;white-space:nowrap;">6</div><div style="position:absolute;left:3px;top:412px;width:30px;height:1px;background:#dedede"></div><div style="position:absolute;left:-283.5px;width:600px;text-align:center;top:389.50px;height:23px;line-height:23px;font-size:17px;font-weight:400;color:#444;white-space:nowrap;">7</div><div style="position:absolute;left:3px;top:436px;width:30px;height:1px;background:#dedede"></div><div style="position:absolute;left:-283.5px;width:600px;text-align:center;top:413.50px;height:23px;line-height:23px;font-size:17px;font-weight:400;color:#444;white-space:nowrap;">8</div><div style="position:absolute;left:3px;top:460px;width:30px;height:1px;background:#dedede"></div><div style="position:absolute;left:-283.5px;width:600px;text-align:center;top:437.50px;height:23px;line-height:23px;font-size:17px;font-weight:400;color:#444;white-space:nowrap;">9</div><div style="position:absolute;left:3px;top:484px;width:30px;height:1px;background:#dedede"></div><div style="position:absolute;left:-283.5px;width:600px;text-align:center;top:461.50px;height:23px;line-height:23px;font-size:17px;font-weight:400;color:#444;white-space:nowrap;">10</div><div style="position:absolute;left:3px;top:508px;width:30px;height:1px;background:#dedede"></div><div style="position:absolute;left:-283.5px;width:600px;text-align:center;top:485.50px;height:23px;line-height:23px;font-size:17px;font-weight:400;color:#444;white-space:nowrap;">11</div><div style="position:absolute;left:3px;top:532px;width:30px;height:1px;background:#dedede"></div><div style="position:absolute;left:-283.5px;width:600px;text-align:center;top:509.50px;height:23px;line-height:23px;font-size:17px;font-weight:400;color:#444;white-space:nowrap;">12</div><div style="position:absolute;left:3px;top:556px;width:30px;height:1px;background:#dedede"></div><div style="position:absolute;left:3px;top:580px;width:30px;height:1px;background:#dedede"></div><div style="position:absolute;left:-283.5px;width:600px;text-align:center;top:557.50px;height:23px;line-height:23px;font-size:17px;font-weight:400;color:#444;white-space:nowrap;">14</div><div style="position:absolute;left:3px;top:604px;width:30px;height:1px;background:#dedede"></div><div style="position:absolute;left:-283.5px;width:600px;text-align:center;top:581.50px;height:23px;line-height:23px;font-size:17px;font-weight:400;color:#444;white-space:nowrap;">15</div><div style="position:absolute;left:3px;top:628px;width:30px;height:1px;background:#dedede"></div><div style="position:absolute;left:-283.5px;width:600px;text-align:center;top:605.50px;height:23px;line-height:23px;font-size:17px;font-weight:400;color:#444;white-space:nowrap;">16</div><div style="position:absolute;left:3px;top:652px;width:30px;height:1px;background:#dedede"></div><div style="position:absolute;left:-283.5px;width:600px;text-align:center;top:629.50px;height:23px;line-height:23px;font-size:17px;font-weight:400;color:#444;white-space:nowrap;">17</div><div style="position:absolute;left:3px;top:676px;width:30px;height:1px;background:#dedede"></div><div style="position:absolute;left:-283.5px;width:600px;text-align:center;top:653.50px;height:23px;line-height:23px;font-size:17px;font-weight:400;color:#444;white-space:nowrap;">18</div><div style="position:absolute;left:3px;top:700px;width:30px;height:1px;background:#dedede"></div><div style="position:absolute;left:-283.5px;width:600px;text-align:center;top:677.50px;height:23px;line-height:23px;font-size:17px;font-weight:400;color:#444;white-space:nowrap;">19</div><div style="position:absolute;left:3px;top:724px;width:30px;height:1px;background:#dedede"></div><div style="position:absolute;left:-283.5px;width:600px;text-align:center;top:701.50px;height:23px;line-height:23px;font-size:17px;font-weight:400;color:#444;white-space:nowrap;">20</div><div style="position:absolute;left:3px;top:748px;width:30px;height:1px;background:#dedede"></div><div style="position:absolute;left:-283.5px;width:600px;text-align:center;top:725.50px;height:23px;line-height:23px;font-size:17px;font-weight:400;color:#444;white-space:nowrap;">21</div><div style="position:absolute;left:3px;top:772px;width:30px;height:1px;background:#dedede"></div><div style="position:absolute;left:-283.5px;width:600px;text-align:center;top:749.50px;height:23px;line-height:23px;font-size:17px;font-weight:400;color:#444;white-space:nowrap;">22</div><div style="position:absolute;left:3px;top:796px;width:30px;height:1px;background:#dedede"></div><div style="position:absolute;left:-283.5px;width:600px;text-align:center;top:773.50px;height:23px;line-height:23px;font-size:17px;font-weight:400;color:#444;white-space:nowrap;">23</div><div style="position:absolute;left:3px;top:820px;width:30px;height:1px;background:#dedede"></div><div style="position:absolute;left:-283.5px;width:600px;text-align:center;top:797.50px;height:23px;line-height:23px;font-size:17px;font-weight:400;color:#444;white-space:nowrap;">24</div><div style="position:absolute;left:3px;top:844px;width:30px;height:1px;background:#dedede"></div><div style="position:absolute;left:-283.5px;width:600px;text-align:center;top:821.50px;height:23px;line-height:23px;font-size:17px;font-weight:400;color:#444;white-space:nowrap;">25</div><div style="position:absolute;left:3px;top:868px;width:30px;height:1px;background:#dedede"></div><div style="position:absolute;left:-283.5px;width:600px;text-align:center;top:845.50px;height:23px;line-height:23px;font-size:17px;font-weight:400;color:#444;white-space:nowrap;">26</div><div style="position:absolute;left:3px;top:892px;width:30px;height:1px;background:#dedede"></div><div style="position:absolute;left:-283.5px;width:600px;text-align:center;top:869.50px;height:23px;line-height:23px;font-size:17px;font-weight:400;color:#444;white-space:nowrap;">27</div><div style="position:absolute;left:3px;top:916px;width:30px;height:1px;background:#dedede"></div><div style="position:absolute;left:0px;top:533px;width:33px;height:23px;background:#e2e2e2"></div><div style="position:absolute;left:0px;top:532px;width:33px;height:1px;background:#c2c2c2"></div><div style="position:absolute;left:0px;top:556px;width:33px;height:1px;background:#c2c2c2"></div><div style="position:absolute;left:32px;top:532px;width:2px;height:25px;background:#107c41"></div><div style="position:absolute;left:-283.5px;width:600px;text-align:center;top:533.50px;height:23px;line-height:23px;font-size:17px;font-weight:400;color:#107c41;white-space:nowrap;">13</div><div style="position:absolute;left:34px;top:293px;width:727px;height:23px;background:#dbe9f3"></div><div style="position:absolute;left:34px;top:292px;width:728px;height:1px;background:#34719f"></div><div style="position:absolute;left:34px;top:316px;width:728px;height:1px;background:#34719f"></div><div style="position:absolute;left:34px;top:796px;width:728px;height:1px;background:#34719f"></div><div style="position:absolute;left:34px;top:820px;width:728px;height:1px;background:#34719f"></div><div style="position:absolute;left:257px;top:292px;width:1px;height:529px;background:#34719f"></div><div style="position:absolute;left:383px;top:292px;width:1px;height:529px;background:#34719f"></div><div style="position:absolute;left:509px;top:292px;width:1px;height:529px;background:#34719f"></div><div style="position:absolute;left:635px;top:292px;width:1px;height:529px;background:#34719f"></div><div style="position:absolute;left:761px;top:292px;width:1px;height:529px;background:#34719f"></div><div style="position:absolute;left:383px;top:820px;width:127px;height:1px;background:#000"></div><div style="position:absolute;left:41px;top:241px;height:28px;line-height:28px;font-size:20px;font-weight:700;color:#1e5479;white-space:nowrap">Operating expenses MyCompany</div><div style="position:absolute;left:257px;width:119px;text-align:right;top:294px;height:23px;line-height:23px;font-size:16px;font-weight:700;color:#000;white-space:nowrap">Estimated</div><div style="position:absolute;left:383px;width:119px;text-align:right;top:294px;height:23px;line-height:23px;font-size:16px;font-weight:700;color:#000;white-space:nowrap">VAT</div><div style="position:absolute;left:509px;width:119px;text-align:right;top:294px;height:23px;line-height:23px;font-size:16px;font-weight:700;color:#000;white-space:nowrap">Actual</div><div style="position:absolute;left:635px;width:119px;text-align:right;top:294px;height:23px;line-height:23px;font-size:16px;font-weight:700;color:#000;white-space:nowrap">Difference</div><div style="position:absolute;left:41px;top:318px;height:23px;line-height:23px;font-size:16px;font-weight:400;color:#000;white-space:nowrap">Advertising</div><div style="position:absolute;left:257px;width:119px;text-align:right;top:318px;height:23px;line-height:23px;font-size:16px;font-weight:400;color:#000;white-space:nowrap">3.000</div><div style="position:absolute;left:383px;width:119px;text-align:right;top:318px;height:23px;line-height:23px;font-size:16px;font-weight:400;color:#000;white-space:nowrap">540</div><div style="position:absolute;left:509px;width:119px;text-align:right;top:318px;height:23px;line-height:23px;font-size:16px;font-weight:400;color:#000;white-space:nowrap">2.500</div><div style="position:absolute;left:635px;width:119px;text-align:right;top:318px;height:23px;line-height:23px;font-size:16px;font-weight:400;color:#000;white-space:nowrap">-500</div><div style="position:absolute;left:41px;top:342px;height:23px;line-height:23px;font-size:16px;font-weight:400;color:#000;white-space:nowrap">Bad debts</div><div style="position:absolute;left:257px;width:119px;text-align:right;top:342px;height:23px;line-height:23px;font-size:16px;font-weight:400;color:#000;white-space:nowrap">2.000</div><div style="position:absolute;left:383px;width:119px;text-align:right;top:342px;height:23px;line-height:23px;font-size:16px;font-weight:400;color:#000;white-space:nowrap">360</div><div style="position:absolute;left:509px;width:119px;text-align:right;top:342px;height:23px;line-height:23px;font-size:16px;font-weight:400;color:#000;white-space:nowrap">2.000</div><div style="position:absolute;left:635px;width:119px;text-align:right;top:342px;height:23px;line-height:23px;font-size:16px;font-weight:400;color:#000;white-space:nowrap">-&nbsp;&nbsp;&nbsp;&nbsp;</div><div style="position:absolute;left:41px;top:366px;height:23px;line-height:23px;font-size:16px;font-weight:400;color:#000;white-space:nowrap">Cash discounts</div><div style="position:absolute;left:257px;width:119px;text-align:right;top:366px;height:23px;line-height:23px;font-size:16px;font-weight:400;color:#000;white-space:nowrap">1.500</div><div style="position:absolute;left:383px;width:119px;text-align:right;top:366px;height:23px;line-height:23px;font-size:16px;font-weight:400;color:#000;white-space:nowrap">270</div><div style="position:absolute;left:509px;width:119px;text-align:right;top:366px;height:23px;line-height:23px;font-size:16px;font-weight:400;color:#000;white-space:nowrap">2.175</div><div style="position:absolute;left:635px;width:119px;text-align:right;top:366px;height:23px;line-height:23px;font-size:16px;font-weight:400;color:#000;white-space:nowrap">675</div><div style="position:absolute;left:41px;top:390px;height:23px;line-height:23px;font-size:16px;font-weight:400;color:#000;white-space:nowrap">Delivery costs</div><div style="position:absolute;left:257px;width:119px;text-align:right;top:390px;height:23px;line-height:23px;font-size:16px;font-weight:400;color:#000;white-space:nowrap">2.000</div><div style="position:absolute;left:383px;width:119px;text-align:right;top:390px;height:23px;line-height:23px;font-size:16px;font-weight:400;color:#000;white-space:nowrap">360</div><div style="position:absolute;left:509px;width:119px;text-align:right;top:390px;height:23px;line-height:23px;font-size:16px;font-weight:400;color:#000;white-space:nowrap">1.500</div><div style="position:absolute;left:635px;width:119px;text-align:right;top:390px;height:23px;line-height:23px;font-size:16px;font-weight:400;color:#000;white-space:nowrap">-500</div><div style="position:absolute;left:41px;top:414px;height:23px;line-height:23px;font-size:16px;font-weight:400;color:#000;white-space:nowrap">Depreciation</div><div style="position:absolute;left:257px;width:119px;text-align:right;top:414px;height:23px;line-height:23px;font-size:16px;font-weight:400;color:#000;white-space:nowrap">1.000</div><div style="position:absolute;left:383px;width:119px;text-align:right;top:414px;height:23px;line-height:23px;font-size:16px;font-weight:400;color:#000;white-space:nowrap">180</div><div style="position:absolute;left:509px;width:119px;text-align:right;top:414px;height:23px;line-height:23px;font-size:16px;font-weight:400;color:#000;white-space:nowrap">1.000</div><div style="position:absolute;left:635px;width:119px;text-align:right;top:414px;height:23px;line-height:23px;font-size:16px;font-weight:400;color:#000;white-space:nowrap">-&nbsp;&nbsp;&nbsp;&nbsp;</div><div style="position:absolute;left:41px;top:438px;height:23px;line-height:23px;font-size:16px;font-weight:400;color:#000;white-space:nowrap">Dues and subscriptions</div><div style="position:absolute;left:257px;width:119px;text-align:right;top:438px;height:23px;line-height:23px;font-size:16px;font-weight:400;color:#000;white-space:nowrap">500</div><div style="position:absolute;left:383px;width:119px;text-align:right;top:438px;height:23px;line-height:23px;font-size:16px;font-weight:400;color:#000;white-space:nowrap">90</div><div style="position:absolute;left:509px;width:119px;text-align:right;top:438px;height:23px;line-height:23px;font-size:16px;font-weight:400;color:#000;white-space:nowrap">525</div><div style="position:absolute;left:635px;width:119px;text-align:right;top:438px;height:23px;line-height:23px;font-size:16px;font-weight:400;color:#000;white-space:nowrap">25</div><div style="position:absolute;left:41px;top:462px;height:23px;line-height:23px;font-size:16px;font-weight:400;color:#000;white-space:nowrap">Insurance</div><div style="position:absolute;left:257px;width:119px;text-align:right;top:462px;height:23px;line-height:23px;font-size:16px;font-weight:400;color:#000;white-space:nowrap">1.300</div><div style="position:absolute;left:383px;width:119px;text-align:right;top:462px;height:23px;line-height:23px;font-size:16px;font-weight:400;color:#000;white-space:nowrap">234</div><div style="position:absolute;left:509px;width:119px;text-align:right;top:462px;height:23px;line-height:23px;font-size:16px;font-weight:400;color:#000;white-space:nowrap">1.275</div><div style="position:absolute;left:635px;width:119px;text-align:right;top:462px;height:23px;line-height:23px;font-size:16px;font-weight:400;color:#000;white-space:nowrap">-25</div><div style="position:absolute;left:41px;top:486px;height:23px;line-height:23px;font-size:16px;font-weight:400;color:#000;white-space:nowrap">Interest</div><div style="position:absolute;left:257px;width:119px;text-align:right;top:486px;height:23px;line-height:23px;font-size:16px;font-weight:400;color:#000;white-space:nowrap">2.000</div><div style="position:absolute;left:383px;width:119px;text-align:right;top:486px;height:23px;line-height:23px;font-size:16px;font-weight:400;color:#000;white-space:nowrap">360</div><div style="position:absolute;left:509px;width:119px;text-align:right;top:486px;height:23px;line-height:23px;font-size:16px;font-weight:400;color:#000;white-space:nowrap">2.200</div><div style="position:absolute;left:635px;width:119px;text-align:right;top:486px;height:23px;line-height:23px;font-size:16px;font-weight:400;color:#000;white-space:nowrap">200</div><div style="position:absolute;left:41px;top:510px;height:23px;line-height:23px;font-size:16px;font-weight:400;color:#000;white-space:nowrap">Legal and auditing</div><div style="position:absolute;left:257px;width:119px;text-align:right;top:510px;height:23px;line-height:23px;font-size:16px;font-weight:400;color:#000;white-space:nowrap">1.000</div><div style="position:absolute;left:383px;width:119px;text-align:right;top:510px;height:23px;line-height:23px;font-size:16px;font-weight:400;color:#000;white-space:nowrap">180</div><div style="position:absolute;left:509px;width:119px;text-align:right;top:510px;height:23px;line-height:23px;font-size:16px;font-weight:400;color:#000;white-space:nowrap">800</div><div style="position:absolute;left:635px;width:119px;text-align:right;top:510px;height:23px;line-height:23px;font-size:16px;font-weight:400;color:#000;white-space:nowrap">-200</div><div style="position:absolute;left:41px;top:534px;height:23px;line-height:23px;font-size:16px;font-weight:400;color:#000;white-space:nowrap">Maintenance and repairs</div><div style="position:absolute;left:257px;width:119px;text-align:right;top:534px;height:23px;line-height:23px;font-size:16px;font-weight:400;color:#000;white-space:nowrap">4.500</div><div style="position:absolute;left:383px;width:119px;text-align:right;top:534px;height:23px;line-height:23px;font-size:16px;font-weight:400;color:#000;white-space:nowrap">810</div><div style="position:absolute;left:509px;width:119px;text-align:right;top:534px;height:23px;line-height:23px;font-size:16px;font-weight:400;color:#000;white-space:nowrap">4.600</div><div style="position:absolute;left:635px;width:119px;text-align:right;top:534px;height:23px;line-height:23px;font-size:16px;font-weight:400;color:#000;white-space:nowrap">100</div><div style="position:absolute;left:41px;top:558px;height:23px;line-height:23px;font-size:16px;font-weight:400;color:#000;white-space:nowrap">Office supplies</div><div style="position:absolute;left:257px;width:119px;text-align:right;top:558px;height:23px;line-height:23px;font-size:16px;font-weight:400;color:#000;white-space:nowrap">800</div><div style="position:absolute;left:383px;width:119px;text-align:right;top:558px;height:23px;line-height:23px;font-size:16px;font-weight:400;color:#000;white-space:nowrap">144</div><div style="position:absolute;left:509px;width:119px;text-align:right;top:558px;height:23px;line-height:23px;font-size:16px;font-weight:400;color:#000;white-space:nowrap">750</div><div style="position:absolute;left:635px;width:119px;text-align:right;top:558px;height:23px;line-height:23px;font-size:16px;font-weight:400;color:#000;white-space:nowrap">-50</div><div style="position:absolute;left:41px;top:582px;height:23px;line-height:23px;font-size:16px;font-weight:400;color:#000;white-space:nowrap">Postage</div><div style="position:absolute;left:257px;width:119px;text-align:right;top:582px;height:23px;line-height:23px;font-size:16px;font-weight:400;color:#000;white-space:nowrap">400</div><div style="position:absolute;left:383px;width:119px;text-align:right;top:582px;height:23px;line-height:23px;font-size:16px;font-weight:400;color:#000;white-space:nowrap">72</div><div style="position:absolute;left:509px;width:119px;text-align:right;top:582px;height:23px;line-height:23px;font-size:16px;font-weight:400;color:#000;white-space:nowrap">350</div><div style="position:absolute;left:635px;width:119px;text-align:right;top:582px;height:23px;line-height:23px;font-size:16px;font-weight:400;color:#000;white-space:nowrap">-50</div><div style="position:absolute;left:41px;top:606px;height:23px;line-height:23px;font-size:16px;font-weight:400;color:#000;white-space:nowrap">Rent or mortgage</div><div style="position:absolute;left:257px;width:119px;text-align:right;top:606px;height:23px;line-height:23px;font-size:16px;font-weight:400;color:#000;white-space:nowrap">4.100</div><div style="position:absolute;left:383px;width:119px;text-align:right;top:606px;height:23px;line-height:23px;font-size:16px;font-weight:400;color:#000;white-space:nowrap">738</div><div style="position:absolute;left:509px;width:119px;text-align:right;top:606px;height:23px;line-height:23px;font-size:16px;font-weight:400;color:#000;white-space:nowrap">4.500</div><div style="position:absolute;left:635px;width:119px;text-align:right;top:606px;height:23px;line-height:23px;font-size:16px;font-weight:400;color:#000;white-space:nowrap">400</div><div style="position:absolute;left:41px;top:630px;height:23px;line-height:23px;font-size:16px;font-weight:400;color:#000;white-space:nowrap">Sales</div><div style="position:absolute;left:257px;width:119px;text-align:right;top:630px;height:23px;line-height:23px;font-size:16px;font-weight:400;color:#000;white-space:nowrap">350</div><div style="position:absolute;left:383px;width:119px;text-align:right;top:630px;height:23px;line-height:23px;font-size:16px;font-weight:400;color:#000;white-space:nowrap">63</div><div style="position:absolute;left:509px;width:119px;text-align:right;top:630px;height:23px;line-height:23px;font-size:16px;font-weight:400;color:#000;white-space:nowrap">400</div><div style="position:absolute;left:635px;width:119px;text-align:right;top:630px;height:23px;line-height:23px;font-size:16px;font-weight:400;color:#000;white-space:nowrap">50</div><div style="position:absolute;left:41px;top:654px;height:23px;line-height:23px;font-size:16px;font-weight:400;color:#000;white-space:nowrap">Shipping and storage</div><div style="position:absolute;left:257px;width:119px;text-align:right;top:654px;height:23px;line-height:23px;font-size:16px;font-weight:400;color:#000;white-space:nowrap">900</div><div style="position:absolute;left:383px;width:119px;text-align:right;top:654px;height:23px;line-height:23px;font-size:16px;font-weight:400;color:#000;white-space:nowrap">162</div><div style="position:absolute;left:509px;width:119px;text-align:right;top:654px;height:23px;line-height:23px;font-size:16px;font-weight:400;color:#000;white-space:nowrap">840</div><div style="position:absolute;left:635px;width:119px;text-align:right;top:654px;height:23px;line-height:23px;font-size:16px;font-weight:400;color:#000;white-space:nowrap">-60</div><div style="position:absolute;left:41px;top:678px;height:23px;line-height:23px;font-size:16px;font-weight:400;color:#000;white-space:nowrap">Supplies</div><div style="position:absolute;left:257px;width:119px;text-align:right;top:678px;height:23px;line-height:23px;font-size:16px;font-weight:400;color:#000;white-space:nowrap">5.000</div><div style="position:absolute;left:383px;width:119px;text-align:right;top:678px;height:23px;line-height:23px;font-size:16px;font-weight:400;color:#000;white-space:nowrap">900</div><div style="position:absolute;left:509px;width:119px;text-align:right;top:678px;height:23px;line-height:23px;font-size:16px;font-weight:400;color:#000;white-space:nowrap">4.500</div><div style="position:absolute;left:635px;width:119px;text-align:right;top:678px;height:23px;line-height:23px;font-size:16px;font-weight:400;color:#000;white-space:nowrap">-500</div><div style="position:absolute;left:41px;top:702px;height:23px;line-height:23px;font-size:16px;font-weight:400;color:#000;white-space:nowrap">Taxes</div><div style="position:absolute;left:257px;width:119px;text-align:right;top:702px;height:23px;line-height:23px;font-size:16px;font-weight:400;color:#000;white-space:nowrap">3.000</div><div style="position:absolute;left:383px;width:119px;text-align:right;top:702px;height:23px;line-height:23px;font-size:16px;font-weight:400;color:#000;white-space:nowrap">540</div><div style="position:absolute;left:509px;width:119px;text-align:right;top:702px;height:23px;line-height:23px;font-size:16px;font-weight:400;color:#000;white-space:nowrap">3.200</div><div style="position:absolute;left:635px;width:119px;text-align:right;top:702px;height:23px;line-height:23px;font-size:16px;font-weight:400;color:#000;white-space:nowrap">200</div><div style="position:absolute;left:41px;top:726px;height:23px;line-height:23px;font-size:16px;font-weight:400;color:#000;white-space:nowrap">Telephone</div><div style="position:absolute;left:257px;width:119px;text-align:right;top:726px;height:23px;line-height:23px;font-size:16px;font-weight:400;color:#000;white-space:nowrap">250</div><div style="position:absolute;left:383px;width:119px;text-align:right;top:726px;height:23px;line-height:23px;font-size:16px;font-weight:400;color:#000;white-space:nowrap">45</div><div style="position:absolute;left:509px;width:119px;text-align:right;top:726px;height:23px;line-height:23px;font-size:16px;font-weight:400;color:#000;white-space:nowrap">280</div><div style="position:absolute;left:635px;width:119px;text-align:right;top:726px;height:23px;line-height:23px;font-size:16px;font-weight:400;color:#000;white-space:nowrap">30</div><div style="position:absolute;left:41px;top:750px;height:23px;line-height:23px;font-size:16px;font-weight:400;color:#000;white-space:nowrap">Utilities</div><div style="position:absolute;left:257px;width:119px;text-align:right;top:750px;height:23px;line-height:23px;font-size:16px;font-weight:400;color:#000;white-space:nowrap">1.400</div><div style="position:absolute;left:383px;width:119px;text-align:right;top:750px;height:23px;line-height:23px;font-size:16px;font-weight:400;color:#000;white-space:nowrap">252</div><div style="position:absolute;left:509px;width:119px;text-align:right;top:750px;height:23px;line-height:23px;font-size:16px;font-weight:400;color:#000;white-space:nowrap">1.385</div><div style="position:absolute;left:635px;width:119px;text-align:right;top:750px;height:23px;line-height:23px;font-size:16px;font-weight:400;color:#000;white-space:nowrap">-15</div><div style="position:absolute;left:41px;top:774px;height:23px;line-height:23px;font-size:16px;font-weight:400;color:#000;white-space:nowrap">Other</div><div style="position:absolute;left:257px;width:119px;text-align:right;top:774px;height:23px;line-height:23px;font-size:16px;font-weight:400;color:#000;white-space:nowrap">1.000</div><div style="position:absolute;left:383px;width:119px;text-align:right;top:774px;height:23px;line-height:23px;font-size:16px;font-weight:400;color:#000;white-space:nowrap">180</div><div style="position:absolute;left:509px;width:119px;text-align:right;top:774px;height:23px;line-height:23px;font-size:16px;font-weight:400;color:#000;white-space:nowrap">750</div><div style="position:absolute;left:635px;width:119px;text-align:right;top:774px;height:23px;line-height:23px;font-size:16px;font-weight:400;color:#000;white-space:nowrap">-220</div><div style="position:absolute;left:41px;top:798px;height:23px;line-height:23px;font-size:16px;font-weight:700;color:#000;white-space:nowrap">Total operating expenses</div><div style="position:absolute;left:257px;width:119px;text-align:right;top:798px;height:23px;line-height:23px;font-size:16px;font-weight:700;color:#000;white-space:nowrap">36.000</div><div style="position:absolute;left:383px;width:119px;text-align:right;top:798px;height:23px;line-height:23px;font-size:16px;font-weight:700;color:#000;white-space:nowrap">6.480</div><div style="position:absolute;left:509px;width:119px;text-align:right;top:798px;height:23px;line-height:23px;font-size:16px;font-weight:700;color:#000;white-space:nowrap">35.530</div><div style="position:absolute;left:635px;width:119px;text-align:right;top:798px;height:23px;line-height:23px;font-size:16px;font-weight:700;color:#000;white-space:nowrap">-440</div><div style="position:absolute;left:0px;top:898px;width:1600px;height:39px;background:#e3e3e3"></div><div style="position:absolute;left:0px;top:936px;width:1600px;height:1px;background:#f4f4f4"></div><svg style="position:absolute;left:29px;top:909px" width="12" height="17" viewBox="0 0 12 17" fill="none" stroke-linecap="butt"><path d="M10 1 L2 8.5 L10 16" stroke="#8a8a8a" stroke-width="1.3"/></svg><svg style="position:absolute;left:69px;top:909px" width="12" height="17" viewBox="0 0 12 17" fill="none" stroke-linecap="butt"><path d="M2 1 L10 8.5 L2 16" stroke="#8a8a8a" stroke-width="1.3"/></svg><div style="position:absolute;left:141px;top:904px;width:84px;height:30px;background:#2e6b94;border-radius:5px"></div><div style="position:absolute;left:-117.0px;width:600px;text-align:center;top:907.80px;height:24px;line-height:24px;font-size:17.8px;font-weight:400;color:#fff;white-space:nowrap;">Content</div><div style="position:absolute;left:236px;top:904px;width:95px;height:30px;background:#2e6b94;border-radius:5px"></div><div style="position:absolute;left:-16.5px;width:600px;text-align:center;top:907.80px;height:24px;line-height:24px;font-size:17.8px;font-weight:400;color:#fff;white-space:nowrap;">Summary</div><div style="position:absolute;left:342px;top:904px;width:79px;height:30px;background:#2e6b94;border-radius:5px"></div><div style="position:absolute;left:81.5px;width:600px;text-align:center;top:907.80px;height:24px;line-height:24px;font-size:17.8px;font-weight:400;color:#fff;white-space:nowrap;">Income</div><div style="position:absolute;left:432px;top:904px;width:92px;height:30px;background:#2e6b94;border-radius:5px"></div><div style="position:absolute;left:178.0px;width:600px;text-align:center;top:907.80px;height:24px;line-height:24px;font-size:17.8px;font-weight:400;color:#fff;white-space:nowrap;">Expenses</div><div style="position:absolute;left:535px;top:904px;width:98px;height:30px;background:#2e6b94;border-radius:5px"></div><div style="position:absolute;left:284.0px;width:600px;text-align:center;top:907.80px;height:24px;line-height:24px;font-size:17.8px;font-weight:400;color:#fff;white-space:nowrap;">Personnel</div><div style="position:absolute;left:230px;top:910px;width:1px;height:18px;background:#cfcfcf"></div><div style="position:absolute;left:336px;top:910px;width:1px;height:18px;background:#cfcfcf"></div><div style="position:absolute;left:426px;top:910px;width:1px;height:18px;background:#cfcfcf"></div><div style="position:absolute;left:529px;top:910px;width:1px;height:18px;background:#cfcfcf"></div><div style="position:absolute;left:639px;top:910px;width:1px;height:18px;background:#cfcfcf"></div><div style="position:absolute;left:749px;top:910px;width:1px;height:18px;background:#cfcfcf"></div><div style="position:absolute;left:832px;top:910px;width:1px;height:18px;background:#cfcfcf"></div><div style="position:absolute;left:644px;top:898px;width:100px;height:35px;background:linear-gradient(#ffffff 0%,#eef3f7 25%,#c9dae6 70%,#b4cddd 100%);border-radius:0 0 6px 6px"></div><div style="position:absolute;left:394px;width:600px;text-align:center;top:905.00px;height:23px;line-height:23px;font-size:17px;font-weight:700;color:#242424;white-space:nowrap;letter-spacing:-0.15px">Operating</div><div style="position:absolute;left:654px;top:929px;width:80px;height:2px;background:#107c41"></div><div style="position:absolute;left:490.5px;width:600px;text-align:center;top:908.30px;height:23px;line-height:23px;font-size:16.5px;font-weight:400;color:#242424;white-space:nowrap;">Sheet1</div><svg style="position:absolute;left:884px;top:910px" width="17" height="17" viewBox="0 0 17 17" fill="none" stroke-linecap="butt"><path d="M8.3 1 V15 M1.2 8 H15.3" stroke="#2e2e2e" stroke-width="1.8"/></svg><div style="position:absolute;left:1155px;top:913px;width:3px;height:3px;background:#333"></div><div style="position:absolute;left:1155px;top:918px;width:3px;height:3px;background:#333"></div><div style="position:absolute;left:1155px;top:923px;width:3px;height:3px;background:#333"></div><div style="position:absolute;left:1176px;top:908px;width:400px;height:21px;background:#f7f7f7;border-radius:10.5px"></div><svg style="position:absolute;left:1181px;top:912px" width="10" height="14" viewBox="0 0 10 14" fill="none" stroke-linecap="butt"><path d="M9 1 L2 7 L9 13 Z" fill="#777"/></svg><div style="position:absolute;left:1197px;top:913px;width:400px;height:11px;background:#8a8a8a;border-radius:5.5px"></div></div>
<div style="position:absolute;left:186px;top:860px;width:1336px;height:937px;box-shadow:0 0 45px 6px rgba(0,0,0,0.32)"></div>
<div class="w" style="left:186px;top:860px;width:1314px;height:937px"><div style="position:absolute;left:0px;top:0px;width:1600px;height:167px;background:#e0e7dd"></div><div style="position:absolute;left:0px;top:167px;width:1600px;height:48px;background:#e4e6e1"></div><div style="position:absolute;left:27px;top:14.50px;height:23px;line-height:23px;font-size:16.5px;font-weight:400;color:#242424;white-space:nowrap;">File</div><div style="position:absolute;left:84px;top:14.50px;height:23px;line-height:23px;font-size:16.5px;font-weight:400;color:#242424;white-space:nowrap;">Home</div><div style="position:absolute;left:154px;top:14.50px;height:23px;line-height:23px;font-size:16.5px;font-weight:400;color:#242424;white-space:nowrap;">Insert</div><div style="position:absolute;left:221px;top:14.50px;height:23px;line-height:23px;font-size:16.5px;font-weight:400;color:#242424;white-space:nowrap;">Page Layout</div><div style="position:absolute;left:338px;top:15.00px;height:22px;line-height:22px;font-size:16px;font-weight:700;color:#242424;white-space:nowrap;letter-spacing:-0.25px;">Formulas</div><div style="position:absolute;left:338px;top:37px;width:70px;height:3px;background:#107c41;border-radius:1.5px"></div><div style="position:absolute;left:431px;top:14.50px;height:23px;line-height:23px;font-size:16.5px;font-weight:400;color:#242424;white-space:nowrap;">Data</div><div style="position:absolute;left:491px;top:14.50px;height:23px;line-height:23px;font-size:16.5px;font-weight:400;color:#242424;white-space:nowrap;">Review</div><div style="position:absolute;left:568px;top:14.50px;height:23px;line-height:23px;font-size:16.5px;font-weight:400;color:#242424;white-space:nowrap;">View</div><div style="position:absolute;left:628px;top:14.50px;height:23px;line-height:23px;font-size:16.5px;font-weight:400;color:#242424;white-space:nowrap;">Help</div><div style="position:absolute;left:10px;top:165px;width:1600px;height:12px;background:linear-gradient(rgba(120,130,118,0.45),rgba(160,168,158,0.18) 35%,rgba(200,205,198,0) 100%);border-radius:0 0 0 8px"></div><div style="position:absolute;left:10px;top:43px;width:1600px;height:124px;background:#fff;border-radius:8px;box-shadow:0 0.5px 1.5px rgba(0,0,0,0.25)"></div><div style="position:absolute;left:-246px;width:600px;text-align:center;top:45.00px;height:50px;line-height:50px;font-size:36px;font-weight:400;color:#333;white-space:nowrap;font-family:'Liberation Serif',serif;"><i>fx</i></div><div style="position:absolute;left:-245px;width:600px;text-align:center;top:93.50px;height:21px;line-height:21px;font-size:15px;font-weight:400;color:#242424;white-space:nowrap;">Insert</div><div style="position:absolute;left:-245px;width:600px;text-align:center;top:113.30px;height:21px;line-height:21px;font-size:15px;font-weight:400;color:#242424;white-space:nowrap;">Function</div><div style="position:absolute;left:93px;top:57px;width:1px;height:78px;background:#e0e0e0"></div><svg style="position:absolute;left:121px;top:56px" width="28" height="33" viewBox="0 0 28 33" fill="none" stroke-linecap="butt"><path d="M25.5 5.5 V2 H2.5 L15 16.5 L2.5 31 H25.5 V27.5" stroke="#333" stroke-width="1.9" stroke-linejoin="miter"/></svg><div style="position:absolute;left:-166px;width:600px;text-align:center;top:95.50px;height:21px;line-height:21px;font-size:15px;font-weight:400;color:#242424;white-space:nowrap;">AutoSum</div><svg style="position:absolute;left:129.5px;top:121.0px" width="9.0" height="7.0" viewBox="0 0 9.0 7.0" fill="none" stroke-linecap="butt"><path d="M1 2.1 L4.5 4.9 L8.0 2.1" stroke="#424242" stroke-width="1.2"/></svg><svg style="position:absolute;left:184.5px;top:53.5px" width="29" height="37" viewBox="0 0 29 37" fill="none" stroke-linecap="butt"><path d="M2 32 V3 Q2 1.2 3.8 1.2 H26.3 V30.3" fill="#fafafa" stroke="#555" stroke-width="1.5"/><path d="M2 32 Q2 30.3 3.8 30.3 H26.3 M2 32 Q2 34.6 4.6 34.6 H26.3 V30.3" fill="#fafafa" stroke="#555" stroke-width="1.5"/><g transform="translate(0.5 1)"><path d="M14 6 L16.6 12.3 L23.3 12.6 L18.1 16.8 L19.9 23.4 L14 19.7 L8.1 23.4 L9.9 16.8 L4.7 12.6 L11.4 12.3 Z" stroke="#3a8ee6" stroke-width="1.5" fill="none"/></g></svg><div style="position:absolute;left:-101px;width:600px;text-align:center;top:93.50px;height:21px;line-height:21px;font-size:15px;font-weight:400;color:#242424;white-space:nowrap;">Recently</div><div style="position:absolute;left:-106px;width:600px;text-align:center;top:113.30px;height:21px;line-height:21px;font-size:15px;font-weight:400;color:#242424;white-space:nowrap;">Used</div><svg style="position:absolute;left:212.5px;top:121.0px" width="9.0" height="7.0" viewBox="0 0 9.0 7.0" fill="none" stroke-linecap="butt"><path d="M1 2.1 L4.5 4.9 L8.0 2.1" stroke="#424242" stroke-width="1.2"/></svg><svg style="position:absolute;left:248.5px;top:53.5px" width="29" height="37" viewBox="0 0 29 37" fill="none" stroke-linecap="butt"><path d="M2 32 V3 Q2 1.2 3.8 1.2 H26.3 V30.3" fill="#fafafa" stroke="#555" stroke-width="1.5"/><path d="M2 32 Q2 30.3 3.8 30.3 H26.3 M2 32 Q2 34.6 4.6 34.6 H26.3 V30.3" fill="#fafafa" stroke="#555" stroke-width="1.5"/><g transform="translate(0.5 1)"><ellipse cx="14" cy="9.5" rx="7.5" ry="3" fill="#a8d8b0" stroke="#2e8b45" stroke-width="1.4"/><path d="M6.5 9.5 V21 Q14 26 21.5 21 V9.5" stroke="#2e8b45" stroke-width="1.4" fill="#e8f4ea"/><path d="M6.5 13 Q14 17 21.5 13" stroke="#2e8b45" stroke-width="1.4"/><path d="M6.5 17 Q14 21 21.5 17" stroke="#2e8b45" stroke-width="1.4"/><path d="M6.5 21 Q14 25 21.5 21" stroke="#2e8b45" stroke-width="1.4"/></g></svg><div style="position:absolute;left:-38px;width:600px;text-align:center;top:93.50px;height:21px;line-height:21px;font-size:15px;font-weight:400;color:#242424;white-space:nowrap;">Financial</div><svg style="position:absolute;left:257.5px;top:121.0px" width="9.0" height="7.0" viewBox="0 0 9.0 7.0" fill="none" stroke-linecap="butt"><path d="M1 2.1 L4.5 4.9 L8.0 2.1" stroke="#424242" stroke-width="1.2"/></svg><svg style="position:absolute;left:308.5px;top:53.5px" width="29" height="37" viewBox="0 0 29 37" fill="none" stroke-linecap="butt"><path d="M2 32 V3 Q2 1.2 3.8 1.2 H26.3 V30.3" fill="#fafafa" stroke="#555" stroke-width="1.5"/><path d="M2 32 Q2 30.3 3.8 30.3 H26.3 M2 32 Q2 34.6 4.6 34.6 H26.3 V30.3" fill="#fafafa" stroke="#555" stroke-width="1.5"/><g transform="translate(0.5 1)"><path d="M9 10 Q9 4.5 14 4.5 Q19.5 4.5 19.5 10 Q19.5 13.5 15.5 15.5 Q14 16.5 14 19.5 V21" stroke="#9b3fb8" stroke-width="1.5" fill="none"/><circle cx="14" cy="25" r="1.1" fill="#9b3fb8"/></g></svg><div style="position:absolute;left:22px;width:600px;text-align:center;top:93.50px;height:21px;line-height:21px;font-size:15px;font-weight:400;color:#242424;white-space:nowrap;">Logical</div><svg style="position:absolute;left:317.5px;top:121.0px" width="9.0" height="7.0" viewBox="0 0 9.0 7.0" fill="none" stroke-linecap="butt"><path d="M1 2.1 L4.5 4.9 L8.0 2.1" stroke="#424242" stroke-width="1.2"/></svg><svg style="position:absolute;left:363.5px;top:53.5px" width="29" height="37" viewBox="0 0 29 37" fill="none" stroke-linecap="butt"><path d="M2 32 V3 Q2 1.2 3.8 1.2 H26.3 V30.3" fill="#fafafa" stroke="#555" stroke-width="1.5"/><path d="M2 32 Q2 30.3 3.8 30.3 H26.3 M2 32 Q2 34.6 4.6 34.6 H26.3 V30.3" fill="#fafafa" stroke="#555" stroke-width="1.5"/><g transform="translate(0.5 1)"><path d="M6.5 26 L14 4.5 L21.5 26 M9 19 H19" stroke="#3a8ee6" stroke-width="1.6" fill="none"/></g></svg><div style="position:absolute;left:77px;width:600px;text-align:center;top:93.50px;height:21px;line-height:21px;font-size:15px;font-weight:400;color:#242424;white-space:nowrap;">Text</div><svg style="position:absolute;left:372.5px;top:121.0px" width="9.0" height="7.0" viewBox="0 0 9.0 7.0" fill="none" stroke-linecap="butt"><path d="M1 2.1 L4.5 4.9 L8.0 2.1" stroke="#424242" stroke-width="1.2"/></svg><svg style="position:absolute;left:417.5px;top:53.5px" width="29" height="37" viewBox="0 0 29 37" fill="none" stroke-linecap="butt"><path d="M2 32 V3 Q2 1.2 3.8 1.2 H26.3 V30.3" fill="#fafafa" stroke="#555" stroke-width="1.5"/><path d="M2 32 Q2 30.3 3.8 30.3 H26.3 M2 32 Q2 34.6 4.6 34.6 H26.3 V30.3" fill="#fafafa" stroke="#555" stroke-width="1.5"/><g transform="translate(0.5 1)"><circle cx="14" cy="14" r="8" stroke="#e8434a" stroke-width="1.5"/><path d="M14 9 V14.5 H18" stroke="#e8434a" stroke-width="1.5"/></g></svg><div style="position:absolute;left:132px;width:600px;text-align:center;top:93.50px;height:21px;line-height:21px;font-size:15px;font-weight:400;color:#242424;white-space:nowrap;">Date &amp;</div><div style="position:absolute;left:125px;width:600px;text-align:center;top:113.30px;height:21px;line-height:21px;font-size:15px;font-weight:400;color:#242424;white-space:nowrap;">Time</div><svg style="position:absolute;left:446.0px;top:121.0px" width="9.0" height="7.0" viewBox="0 0 9.0 7.0" fill="none" stroke-linecap="butt"><path d="M1 2.1 L4.5 4.9 L8.0 2.1" stroke="#424242" stroke-width="1.2"/></svg><svg style="position:absolute;left:487.5px;top:53.5px" width="29" height="37" viewBox="0 0 29 37" fill="none" stroke-linecap="butt"><path d="M2 32 V3 Q2 1.2 3.8 1.2 H26.3 V30.3" fill="#fafafa" stroke="#555" stroke-width="1.5"/><path d="M2 32 Q2 30.3 3.8 30.3 H26.3 M2 32 Q2 34.6 4.6 34.6 H26.3 V30.3" fill="#fafafa" stroke="#555" stroke-width="1.5"/><g transform="translate(0.5 1)"><circle cx="12.5" cy="12.5" r="6" stroke="#3a8ee6" stroke-width="1.5"/><path d="M17 17 L22 22" stroke="#3a8ee6" stroke-width="1.5"/></g></svg><div style="position:absolute;left:202px;width:600px;text-align:center;top:93.50px;height:21px;line-height:21px;font-size:15px;font-weight:400;color:#242424;white-space:nowrap;">Lookup &amp;</div><div style="position:absolute;left:196px;width:600px;text-align:center;top:113.30px;height:21px;line-height:21px;font-size:15px;font-weight:400;color:#242424;white-space:nowrap;">Reference</div><svg style="position:absolute;left:533.5px;top:121.0px" width="9.0" height="7.0" viewBox="0 0 9.0 7.0" fill="none" stroke-linecap="butt"><path d="M1 2.1 L4.5 4.9 L8.0 2.1" stroke="#424242" stroke-width="1.2"/></svg><svg style="position:absolute;left:562.5px;top:53.5px" width="29" height="37" viewBox="0 0 29 37" fill="none" stroke-linecap="butt"><path d="M2 32 V3 Q2 1.2 3.8 1.2 H26.3 V30.3" fill="#fafafa" stroke="#555" stroke-width="1.5"/><path d="M2 32 Q2 30.3 3.8 30.3 H26.3 M2 32 Q2 34.6 4.6 34.6 H26.3 V30.3" fill="#fafafa" stroke="#555" stroke-width="1.5"/><g transform="translate(0.5 1)"><ellipse cx="14" cy="14" rx="6" ry="8.5" stroke="#2e8b45" stroke-width="1.5"/><path d="M8 14 H20" stroke="#2e8b45" stroke-width="1.5"/></g></svg><div style="position:absolute;left:277px;width:600px;text-align:center;top:93.50px;height:21px;line-height:21px;font-size:15px;font-weight:400;color:#242424;white-space:nowrap;">Maths &amp;</div><div style="position:absolute;left:271px;width:600px;text-align:center;top:113.30px;height:21px;line-height:21px;font-size:15px;font-weight:400;color:#242424;white-space:nowrap;">Trig</div><svg style="position:absolute;left:587.5px;top:121.0px" width="9.0" height="7.0" viewBox="0 0 9.0 7.0" fill="none" stroke-linecap="butt"><path d="M1 2.1 L4.5 4.9 L8.0 2.1" stroke="#424242" stroke-width="1.2"/></svg><svg style="position:absolute;left:636.5px;top:53.5px" width="29" height="37" viewBox="0 0 29 37" fill="none" stroke-linecap="butt"><path d="M2 32 V3 Q2 1.2 3.8 1.2 H26.3 V30.3" fill="#fafafa" stroke="#555" stroke-width="1.5"/><path d="M2 32 Q2 30.3 3.8 30.3 H26.3 M2 32 Q2 34.6 4.6 34.6 H26.3 V30.3" fill="#fafafa" stroke="#555" stroke-width="1.5"/><g transform="translate(0.5 1)"><circle cx="8.5" cy="14" r="1.8" fill="#e8434a"/><circle cx="14" cy="14" r="1.8" fill="#e8434a"/><circle cx="19.5" cy="14" r="1.8" fill="#e8434a"/></g></svg><div style="position:absolute;left:351px;width:600px;text-align:center;top:93.50px;height:21px;line-height:21px;font-size:15px;font-weight:400;color:#242424;white-space:nowrap;">More</div><div style="position:absolute;left:343.5px;width:600px;text-align:center;top:113.30px;height:21px;line-height:21px;font-size:15px;font-weight:400;color:#242424;white-space:nowrap;">Functions</div><svg style="position:absolute;left:678.5px;top:121.0px" width="9.0" height="7.0" viewBox="0 0 9.0 7.0" fill="none" stroke-linecap="butt"><path d="M1 2.1 L4.5 4.9 L8.0 2.1" stroke="#424242" stroke-width="1.2"/></svg><div style="position:absolute;left:58px;width:600px;text-align:center;top:145.50px;height:18px;line-height:18px;font-size:13px;font-weight:400;color:#3b3b3b;white-space:nowrap;">Function Library</div><div style="position:absolute;left:701px;top:49px;width:1px;height:111px;background:#e0e0e0"></div><svg style="position:absolute;left:725px;top:53px" width="42" height="40" viewBox="0 0 42 40" fill="none" stroke-linecap="butt"><path d="M20.3 1.7 H35 V19.5 L17.3 35 L2.3 20.3 Z" fill="#fafafa" stroke="#444" stroke-width="1.5" stroke-linejoin="miter"/><circle cx="28.5" cy="8.3" r="1.3" stroke="#444" stroke-width="1"/><rect x="24.3" y="20.3" width="14.4" height="18" fill="#fafafa" stroke="#444" stroke-width="1.5"/><rect x="27" y="24" width="3" height="3" fill="#8bbcec" stroke="#3a8ee6" stroke-width="1"/><rect x="27" y="30" width="3" height="3" fill="#8bbcec" stroke="#3a8ee6" stroke-width="1"/><path d="M31.5 25.5 H36.5 M31.5 31.5 H36.5" stroke="#3a8ee6" stroke-width="1.4"/></svg><div style="position:absolute;left:444px;width:600px;text-align:center;top:93.50px;height:21px;line-height:21px;font-size:15px;font-weight:400;color:#242424;white-space:nowrap;">Name</div><div style="position:absolute;left:444px;width:600px;text-align:center;top:113.30px;height:21px;line-height:21px;font-size:15px;font-weight:400;color:#242424;white-space:nowrap;">Manager</div><svg style="position:absolute;left:783px;top:53px" width="20" height="20" viewBox="0 0 20 20" fill="none" stroke-linecap="butt"><path d="M18.3 0.8 V8 L8.3 18.3 L0.9 9.7 L10.3 0.8 Z" fill="#fafafa" stroke="#444" stroke-width="1.4" stroke-linejoin="round"/><circle cx="14.7" cy="4" r="1.1" fill="#444"/><path d="M5.5 10.5 L11.5 5.5 M7.5 13.5 L13.5 8.5" stroke="#555" stroke-width="1"/></svg><div style="position:absolute;left:809px;top:53.00px;height:21px;line-height:21px;font-size:15px;font-weight:400;color:#242424;white-space:nowrap;">Define Name</div><svg style="position:absolute;left:910.5px;top:60.0px" width="9.0" height="7.0" viewBox="0 0 9.0 7.0" fill="none" stroke-linecap="butt"><path d="M1 2.1 L4.5 4.9 L8.0 2.1" stroke="#424242" stroke-width="1.2"/></svg><svg style="position:absolute;left:783px;top:85px" width="22" height="22" viewBox="0 0 22 22" fill="none" stroke-linecap="butt"><path d="M18.3 0.8 V8 L8.3 18.3 L0.9 9.7 L10.3 0.8 Z" fill="#fafafa" stroke="#c4c4c4" stroke-width="1.4" stroke-linejoin="round"/><circle cx="14.7" cy="4" r="1.1" fill="#c4c4c4"/><text x="10" y="20" font-family="Liberation Serif" font-style="italic" font-size="12" fill="#b8b8b8">fx</text></svg><div style="position:absolute;left:809px;top:86.00px;height:19px;line-height:19px;font-size:14.2px;font-weight:400;color:#b3b3b3;white-space:nowrap;">Use in Formula</div><svg style="position:absolute;left:910.5px;top:92.0px" width="9.0" height="7.0" viewBox="0 0 9.0 7.0" fill="none" stroke-linecap="butt"><path d="M1 2.1 L4.5 4.9 L8.0 2.1" stroke="#c0c0c0" stroke-width="1.2"/></svg><svg style="position:absolute;left:782px;top:117px" width="22" height="20" viewBox="0 0 22 20" fill="none" stroke-linecap="butt"><rect x="1" y="1" width="18" height="15" fill="#fff" stroke="#444" stroke-width="1.2"/><rect x="1" y="5" width="6" height="11" fill="#3a8ee6"/><rect x="1" y="1" width="18" height="4" fill="#fff" stroke="#444" stroke-width="1.2"/><path d="M1 10.5 H19 M7 1 V16 M13 1 V16" stroke="#444" stroke-width="1"/><path d="M20 9 V13 L14 19 L10 15 L16 9 Z" fill="#fff" stroke="#444" stroke-width="1.3"/></svg><div style="position:absolute;left:809px;top:117.00px;height:21px;line-height:21px;font-size:15px;font-weight:400;color:#242424;white-space:nowrap;">Create from Selection</div><div style="position:absolute;left:537px;width:600px;text-align:center;top:145.50px;height:18px;line-height:18px;font-size:13px;font-weight:400;color:#3b3b3b;white-space:nowrap;">Defined Names</div><div style="position:absolute;left:972px;top:49px;width:1px;height:111px;background:#e0e0e0"></div><svg style="position:absolute;left:987px;top:52px" width="22" height="22" viewBox="0 0 22 22" fill="none" stroke-linecap="butt"><path d="M1.5 14.5 V1.4 H10.3 V8 H1.5 M1.5 14.5 H7.5" stroke="#444" stroke-width="1.3" fill="none"/><path d="M15 13 H20.6 V20.5 H11.3 V17.5" stroke="#444" stroke-width="1.3" fill="none"/><path d="M8.5 11.2 L14.5 16.8 M14.5 12.3 V16.8 H10" stroke="#3a8ee6" stroke-width="1.5" fill="none"/></svg><div style="position:absolute;left:1013.5px;top:54.00px;height:19px;line-height:19px;font-size:14.2px;font-weight:400;color:#242424;white-space:nowrap;">Trace Precedents</div><svg style="position:absolute;left:987px;top:84px" width="22" height="22" viewBox="0 0 22 22" fill="none" stroke-linecap="butt"><path d="M1.5 8.2 V1.6 H10.3 V4.2 M1.5 8.2 H4" stroke="#444" stroke-width="1.3" fill="none"/><path d="M15 7.2 H20.6 V20.8 H11.3 V14 H20.6 M11.3 14 V11.5" stroke="#444" stroke-width="1.3" fill="none"/><path d="M7 5.8 L13.1 11.9 M13.1 7.6 V11.9 H8.8" stroke="#3a8ee6" stroke-width="1.5" fill="none"/></svg><div style="position:absolute;left:1013.5px;top:86.00px;height:19px;line-height:19px;font-size:14.2px;font-weight:400;color:#242424;white-space:nowrap;">Trace Dependents</div><svg style="position:absolute;left:987px;top:116px" width="23" height="23" viewBox="0 0 23 23" fill="none" stroke-linecap="butt"><path d="M4.3 3.7 V17.7 M1.3 14.7 L4.3 17.7 L7.3 14.7 M4.3 3.7 H17.8 M14.8 0.7 L17.8 3.7 L14.8 6.7" stroke="#3a8ee6" stroke-width="1.6" fill="none"/><path d="M5.2 5 L9.9 10.2 M9.9 6.4 V10.2 H6.1" stroke="#3a8ee6" stroke-width="1.4" fill="none"/><path d="M12.2 12.1 L21.1 21 M21.1 12.1 L12.2 21" stroke="#e8434a" stroke-width="1.2"/></svg><div style="position:absolute;left:1013.5px;top:118.00px;height:19px;line-height:19px;font-size:14.2px;font-weight:400;color:#242424;white-space:nowrap;">Remove Arrows</div><svg style="position:absolute;left:1132.0px;top:124.0px" width="9.0" height="7.0" viewBox="0 0 9.0 7.0" fill="none" stroke-linecap="butt"><path d="M1 2.1 L4.5 4.9 L8.0 2.1" stroke="#424242" stroke-width="1.2"/></svg><div style="position:absolute;left:1150px;top:48px;width:141px;height:30px;background:#ececec;border:1px solid #8c8c8c;border-radius:5px;box-sizing:border-box"></div><svg style="position:absolute;left:1153px;top:51px" width="26" height="26" viewBox="0 0 26 26" fill="none" stroke-linecap="butt"><path d="M2 16.6 V2.3 H16.8 Z" stroke="#333" stroke-width="1.3" fill="#f4f4f4" stroke-linejoin="miter"/><text x="7.5" y="18.5" font-family="Liberation Serif" font-style="italic" font-size="19" fill="#333">fx</text></svg><div style="position:absolute;left:1180px;top:54.00px;height:19px;line-height:19px;font-size:14.2px;font-weight:400;color:#242424;white-space:nowrap;">Show Formulas</div><svg style="position:absolute;left:1153px;top:84px" width="24" height="22" viewBox="0 0 24 22" fill="none" stroke-linecap="butt"><path d="M11.5 1.8 L20.6 19.3 H2.2 Z" fill="#fde2ae" stroke="#e07b10" stroke-width="1.9" stroke-linejoin="round"/><path d="M11.5 7.2 V14.4" stroke="#444" stroke-width="1.6"/><path d="M8.3 14.8 L12.8 19.6" stroke="#555" stroke-width="1.5"/><path d="M12.8 19.6 L21.6 11.2" stroke="#1e8a3c" stroke-width="1.5"/></svg><div style="position:absolute;left:1180px;top:86.00px;height:19px;line-height:19px;font-size:14.2px;font-weight:400;color:#242424;white-space:nowrap;">Error Checking</div><svg style="position:absolute;left:1291.0px;top:92.0px" width="9.0" height="7.0" viewBox="0 0 9.0 7.0" fill="none" stroke-linecap="butt"><path d="M1 2.1 L4.5 4.9 L8.0 2.1" stroke="#424242" stroke-width="1.2"/></svg><svg style="position:absolute;left:1154px;top:116px" width="22" height="22" viewBox="0 0 22 22" fill="none" stroke-linecap="butt"><circle cx="10.8" cy="10.7" r="9.6" stroke="#3a3a3a" stroke-width="1.2"/><text x="4.2" y="15.3" font-family="Liberation Serif" font-style="italic" font-size="14" fill="#333">fx</text></svg><div style="position:absolute;left:1180px;top:118.00px;height:19px;line-height:19px;font-size:14.2px;font-weight:400;color:#242424;white-space:nowrap;">Evaluate Formula</div><div style="position:absolute;left:881.5px;width:600px;text-align:center;top:145.50px;height:18px;line-height:18px;font-size:13px;font-weight:400;color:#3b3b3b;white-space:nowrap;">Formula Auditing</div><div style="position:absolute;left:11px;top:177px;width:125px;height:30px;background:#fff;border:1px solid #d2d4d0;box-sizing:border-box;border-radius:5px"></div><div style="position:absolute;left:18px;top:181.50px;height:21px;line-height:21px;font-size:15px;font-weight:400;color:#242424;white-space:nowrap;">I9</div><svg style="position:absolute;left:116px;top:187.5px" width="16" height="12" viewBox="0 0 16 12" fill="none" stroke-linecap="butt"><path d="M2 3 L8 9 L14 3" stroke="#3a3a3a" stroke-width="1.3"/></svg><div style="position:absolute;left:148px;top:186px;width:3px;height:3px;background:#3c3c3c"></div><div style="position:absolute;left:148px;top:191px;width:3px;height:3px;background:#3c3c3c"></div><div style="position:absolute;left:148px;top:196px;width:3px;height:3px;background:#3c3c3c"></div><div style="position:absolute;left:163px;top:177px;width:90px;height:30px;background:#fff;border:1px solid #d2d4d0;box-sizing:border-box;border-radius:5px"></div><svg style="position:absolute;left:171px;top:185px" width="15" height="15" viewBox="0 0 15 15" fill="none" stroke-linecap="butt"><path d="M1 1 L14 14 M14 1 L1 14" stroke="#a6a6a6" stroke-width="1.2"/></svg><svg style="position:absolute;left:198px;top:185px" width="20" height="14" viewBox="0 0 20 14" fill="none" stroke-linecap="butt"><path d="M1 7 L7 13 L19 1" stroke="#a6a6a6" stroke-width="1.2"/></svg><div style="position:absolute;left:229px;top:177.50px;height:29px;line-height:29px;font-size:21px;font-weight:400;color:#2a2a2a;white-space:nowrap;font-family:'Liberation Serif',serif;font-style:italic;">fx</div><div style="position:absolute;left:260px;top:177px;width:1300px;height:30px;background:#fff;border:1px solid #d2d4d0;box-sizing:border-box;border-radius:5px"></div><div style="position:absolute;left:0px;top:215px;width:1600px;height:23px;background:#efefef"></div><div style="position:absolute;left:0px;top:238px;width:1600px;height:1px;background:#b9b9b9"></div><svg style="position:absolute;left:8px;top:218px" width="22" height="18" viewBox="0 0 22 18" fill="none" stroke-linecap="butt"><path d="M20 2 L20 17 L4 17 Z" fill="#d9d9d9"/></svg><div style="position:absolute;left:0px;top:239px;width:33px;height:660px;background:#efefef"></div><div style="position:absolute;left:33px;top:215px;width:1px;height:684px;background:#bdbdbd"></div><div style="position:absolute;left:34px;top:239px;width:1600px;height:659px;background:#fff"></div><div style="position:absolute;left:-85.5px;width:600px;text-align:center;top:215.50px;height:23px;line-height:23px;font-size:16.5px;font-weight:400;color:#444;white-space:nowrap;">A</div><div style="position:absolute;left:395px;top:216px;width:1px;height:22px;background:#d5d5d5"></div><div style="position:absolute;left:192.5px;width:600px;text-align:center;top:215.50px;height:23px;line-height:23px;font-size:16.5px;font-weight:400;color:#444;white-space:nowrap;">B</div><div style="position:absolute;left:589px;top:216px;width:1px;height:22px;background:#d5d5d5"></div><div style="position:absolute;left:386.5px;width:600px;text-align:center;top:215.50px;height:23px;line-height:23px;font-size:16.5px;font-weight:400;color:#444;white-space:nowrap;">C</div><div style="position:absolute;left:783px;top:216px;width:1px;height:22px;background:#d5d5d5"></div><div style="position:absolute;left:580.5px;width:600px;text-align:center;top:215.50px;height:23px;line-height:23px;font-size:16.5px;font-weight:400;color:#444;white-space:nowrap;">D</div><div style="position:absolute;left:977px;top:216px;width:1px;height:22px;background:#d5d5d5"></div><div style="position:absolute;left:774.5px;width:600px;text-align:center;top:215.50px;height:23px;line-height:23px;font-size:16.5px;font-weight:400;color:#444;white-space:nowrap;">E</div><div style="position:absolute;left:1171px;top:216px;width:1px;height:22px;background:#d5d5d5"></div><div style="position:absolute;left:951.5px;width:600px;text-align:center;top:215.50px;height:23px;line-height:23px;font-size:16.5px;font-weight:400;color:#444;white-space:nowrap;">F</div><div style="position:absolute;left:1331px;top:216px;width:1px;height:22px;background:#d5d5d5"></div><div style="position:absolute;left:1111.5px;width:600px;text-align:center;top:215.50px;height:23px;line-height:23px;font-size:16.5px;font-weight:400;color:#444;white-space:nowrap;">G</div><div style="position:absolute;left:3px;top:268px;width:30px;height:1px;background:#dedede"></div><div style="position:absolute;left:-283.5px;width:600px;text-align:center;top:242.50px;height:23px;line-height:23px;font-size:17px;font-weight:400;color:#444;white-space:nowrap;">1</div><div style="position:absolute;left:3px;top:292px;width:30px;height:1px;background:#dedede"></div><div style="position:absolute;left:-283.5px;width:600px;text-align:center;top:269.50px;height:23px;line-height:23px;font-size:17px;font-weight:400;color:#444;white-space:nowrap;">2</div><div style="position:absolute;left:3px;top:316px;width:30px;height:1px;background:#dedede"></div><div style="position:absolute;left:-283.5px;width:600px;text-align:center;top:293.50px;height:23px;line-height:23px;font-size:17px;font-weight:400;color:#444;white-space:nowrap;">3</div><div style="position:absolute;left:3px;top:340px;width:30px;height:1px;background:#dedede"></div><div style="position:absolute;left:-283.5px;width:600px;text-align:center;top:317.50px;height:23px;line-height:23px;font-size:17px;font-weight:400;color:#444;white-space:nowrap;">4</div><div style="position:absolute;left:3px;top:364px;width:30px;height:1px;background:#dedede"></div><div style="position:absolute;left:-283.5px;width:600px;text-align:center;top:341.50px;height:23px;line-height:23px;font-size:17px;font-weight:400;color:#444;white-space:nowrap;">5</div><div style="position:absolute;left:3px;top:388px;width:30px;height:1px;background:#dedede"></div><div style="position:absolute;left:-283.5px;width:600px;text-align:center;top:365.50px;height:23px;line-height:23px;font-size:17px;font-weight:400;color:#444;white-space:nowrap;">6</div><div style="position:absolute;left:3px;top:412px;width:30px;height:1px;background:#dedede"></div><div style="position:absolute;left:-283.5px;width:600px;text-align:center;top:389.50px;height:23px;line-height:23px;font-size:17px;font-weight:400;color:#444;white-space:nowrap;">7</div><div style="position:absolute;left:3px;top:436px;width:30px;height:1px;background:#dedede"></div><div style="position:absolute;left:-283.5px;width:600px;text-align:center;top:413.50px;height:23px;line-height:23px;font-size:17px;font-weight:400;color:#444;white-space:nowrap;">8</div><div style="position:absolute;left:3px;top:460px;width:30px;height:1px;background:#dedede"></div><div style="position:absolute;left:3px;top:484px;width:30px;height:1px;background:#dedede"></div><div style="position:absolute;left:-283.5px;width:600px;text-align:center;top:461.50px;height:23px;line-height:23px;font-size:17px;font-weight:400;color:#444;white-space:nowrap;">10</div><div style="position:absolute;left:3px;top:508px;width:30px;height:1px;background:#dedede"></div><div style="position:absolute;left:-283.5px;width:600px;text-align:center;top:485.50px;height:23px;line-height:23px;font-size:17px;font-weight:400;color:#444;white-space:nowrap;">11</div><div style="position:absolute;left:3px;top:532px;width:30px;height:1px;background:#dedede"></div><div style="position:absolute;left:-283.5px;width:600px;text-align:center;top:509.50px;height:23px;line-height:23px;font-size:17px;font-weight:400;color:#444;white-space:nowrap;">12</div><div style="position:absolute;left:3px;top:556px;width:30px;height:1px;background:#dedede"></div><div style="position:absolute;left:-283.5px;width:600px;text-align:center;top:533.50px;height:23px;line-height:23px;font-size:17px;font-weight:400;color:#444;white-space:nowrap;">13</div><div style="position:absolute;left:3px;top:580px;width:30px;height:1px;background:#dedede"></div><div style="position:absolute;left:-283.5px;width:600px;text-align:center;top:557.50px;height:23px;line-height:23px;font-size:17px;font-weight:400;color:#444;white-space:nowrap;">14</div><div style="position:absolute;left:3px;top:604px;width:30px;height:1px;background:#dedede"></div><div style="position:absolute;left:-283.5px;width:600px;text-align:center;top:581.50px;height:23px;line-height:23px;font-size:17px;font-weight:400;color:#444;white-space:nowrap;">15</div><div style="position:absolute;left:3px;top:628px;width:30px;height:1px;background:#dedede"></div><div style="position:absolute;left:-283.5px;width:600px;text-align:center;top:605.50px;height:23px;line-height:23px;font-size:17px;font-weight:400;color:#444;white-space:nowrap;">16</div><div style="position:absolute;left:3px;top:652px;width:30px;height:1px;background:#dedede"></div><div style="position:absolute;left:-283.5px;width:600px;text-align:center;top:629.50px;height:23px;line-height:23px;font-size:17px;font-weight:400;color:#444;white-space:nowrap;">17</div><div style="position:absolute;left:3px;top:676px;width:30px;height:1px;background:#dedede"></div><div style="position:absolute;left:-283.5px;width:600px;text-align:center;top:653.50px;height:23px;line-height:23px;font-size:17px;font-weight:400;color:#444;white-space:nowrap;">18</div><div style="position:absolute;left:3px;top:700px;width:30px;height:1px;background:#dedede"></div><div style="position:absolute;left:-283.5px;width:600px;text-align:center;top:677.50px;height:23px;line-height:23px;font-size:17px;font-weight:400;color:#444;white-space:nowrap;">19</div><div style="position:absolute;left:3px;top:724px;width:30px;height:1px;background:#dedede"></div><div style="position:absolute;left:-283.5px;width:600px;text-align:center;top:701.50px;height:23px;line-height:23px;font-size:17px;font-weight:400;color:#444;white-space:nowrap;">20</div><div style="position:absolute;left:3px;top:748px;width:30px;height:1px;background:#dedede"></div><div style="position:absolute;left:-283.5px;width:600px;text-align:center;top:725.50px;height:23px;line-height:23px;font-size:17px;font-weight:400;color:#444;white-space:nowrap;">21</div><div style="position:absolute;left:3px;top:772px;width:30px;height:1px;background:#dedede"></div><div style="position:absolute;left:-283.5px;width:600px;text-align:center;top:749.50px;height:23px;line-height:23px;font-size:17px;font-weight:400;color:#444;white-space:nowrap;">22</div><div style="position:absolute;left:3px;top:796px;width:30px;height:1px;background:#dedede"></div><div style="position:absolute;left:-283.5px;width:600px;text-align:center;top:773.50px;height:23px;line-height:23px;font-size:17px;font-weight:400;color:#444;white-space:nowrap;">23</div><div style="position:absolute;left:3px;top:820px;width:30px;height:1px;background:#dedede"></div><div style="position:absolute;left:-283.5px;width:600px;text-align:center;top:797.50px;height:23px;line-height:23px;font-size:17px;font-weight:400;color:#444;white-space:nowrap;">24</div><div style="position:absolute;left:3px;top:844px;width:30px;height:1px;background:#dedede"></div><div style="position:absolute;left:-283.5px;width:600px;text-align:center;top:821.50px;height:23px;line-height:23px;font-size:17px;font-weight:400;color:#444;white-space:nowrap;">25</div><div style="position:absolute;left:3px;top:868px;width:30px;height:1px;background:#dedede"></div><div style="position:absolute;left:-283.5px;width:600px;text-align:center;top:845.50px;height:23px;line-height:23px;font-size:17px;font-weight:400;color:#444;white-space:nowrap;">26</div><div style="position:absolute;left:3px;top:892px;width:30px;height:1px;background:#dedede"></div><div style="position:absolute;left:-283.5px;width:600px;text-align:center;top:869.50px;height:23px;line-height:23px;font-size:17px;font-weight:400;color:#444;white-space:nowrap;">27</div><div style="position:absolute;left:3px;top:916px;width:30px;height:1px;background:#dedede"></div><div style="position:absolute;left:0px;top:437px;width:33px;height:23px;background:#e2e2e2"></div><div style="position:absolute;left:0px;top:436px;width:33px;height:1px;background:#c2c2c2"></div><div style="position:absolute;left:0px;top:460px;width:33px;height:1px;background:#c2c2c2"></div><div style="position:absolute;left:32px;top:436px;width:2px;height:25px;background:#107c41"></div><div style="position:absolute;left:-283.5px;width:600px;text-align:center;top:437.50px;height:23px;line-height:23px;font-size:17px;font-weight:400;color:#107c41;white-space:nowrap;">9</div><div style="position:absolute;left:34px;top:293px;width:1137px;height:23px;background:#dbe9f3"></div><div style="position:absolute;left:34px;top:292px;width:1138px;height:1px;background:#34719f"></div><div style="position:absolute;left:34px;top:316px;width:1138px;height:1px;background:#34719f"></div><div style="position:absolute;left:34px;top:796px;width:1138px;height:1px;background:#34719f"></div><div style="position:absolute;left:34px;top:820px;width:1138px;height:1px;background:#34719f"></div><div style="position:absolute;left:395px;top:292px;width:1px;height:529px;background:#34719f"></div><div style="position:absolute;left:589px;top:292px;width:1px;height:529px;background:#34719f"></div><div style="position:absolute;left:783px;top:292px;width:1px;height:529px;background:#34719f"></div><div style="position:absolute;left:977px;top:292px;width:1px;height:529px;background:#34719f"></div><div style="position:absolute;left:1171px;top:292px;width:1px;height:529px;background:#34719f"></div><div style="position:absolute;left:589px;top:820px;width:195px;height:1px;background:#000"></div><div style="position:absolute;left:38px;top:241px;height:28px;line-height:28px;font-size:20px;font-weight:700;color:#1e5479;white-space:nowrap">Operating expenses MyCompany</div><div style="position:absolute;left:395px;width:190px;text-align:right;top:294px;height:23px;line-height:23px;font-size:16px;font-weight:700;color:#000;white-space:nowrap">Estimated</div><div style="position:absolute;left:589px;width:190px;text-align:right;top:294px;height:23px;line-height:23px;font-size:16px;font-weight:700;color:#000;white-space:nowrap">VAT</div><div style="position:absolute;left:783px;width:190px;text-align:right;top:294px;height:23px;line-height:23px;font-size:16px;font-weight:700;color:#000;white-space:nowrap">Actual</div><div style="position:absolute;left:977px;width:190px;text-align:right;top:294px;height:23px;line-height:23px;font-size:16px;font-weight:700;color:#000;white-space:nowrap">Difference</div><div style="position:absolute;left:38px;top:318px;height:23px;line-height:23px;font-size:16px;font-weight:400;color:#000;white-space:nowrap">Advertising</div><div style="position:absolute;left:399px;top:318px;height:23px;line-height:23px;font-size:16px;font-weight:400;color:#000;white-space:nowrap">3000</div><div style="position:absolute;left:593px;top:318px;height:23px;line-height:23px;font-size:16px;font-weight:400;color:#000;white-space:nowrap">=B4*0,18</div><div style="position:absolute;left:787px;top:318px;height:23px;line-height:23px;font-size:16px;font-weight:400;color:#000;white-space:nowrap">2500</div><div style="position:absolute;left:981px;top:318px;height:23px;line-height:23px;font-size:16px;font-weight:400;color:#000;white-space:nowrap">=D4-B4</div><div style="position:absolute;left:38px;top:342px;height:23px;line-height:23px;font-size:16px;font-weight:400;color:#000;white-space:nowrap">Bad debts</div><div style="position:absolute;left:399px;top:342px;height:23px;line-height:23px;font-size:16px;font-weight:400;color:#000;white-space:nowrap">2000</div><div style="position:absolute;left:593px;top:342px;height:23px;line-height:23px;font-size:16px;font-weight:400;color:#000;white-space:nowrap">=B5*0,18</div><div style="position:absolute;left:787px;top:342px;height:23px;line-height:23px;font-size:16px;font-weight:400;color:#000;white-space:nowrap">2000</div><div style="position:absolute;left:981px;top:342px;height:23px;line-height:23px;font-size:16px;font-weight:400;color:#000;white-space:nowrap">=D5-B5</div><div style="position:absolute;left:38px;top:366px;height:23px;line-height:23px;font-size:16px;font-weight:400;color:#000;white-space:nowrap">Cash discounts</div><div style="position:absolute;left:399px;top:366px;height:23px;line-height:23px;font-size:16px;font-weight:400;color:#000;white-space:nowrap">1500</div><div style="position:absolute;left:593px;top:366px;height:23px;line-height:23px;font-size:16px;font-weight:400;color:#000;white-space:nowrap">=B6*0,18</div><div style="position:absolute;left:787px;top:366px;height:23px;line-height:23px;font-size:16px;font-weight:400;color:#000;white-space:nowrap">2175</div><div style="position:absolute;left:981px;top:366px;height:23px;line-height:23px;font-size:16px;font-weight:400;color:#000;white-space:nowrap">=D6-B6</div><div style="position:absolute;left:38px;top:390px;height:23px;line-height:23px;font-size:16px;font-weight:400;color:#000;white-space:nowrap">Delivery costs</div><div style="position:absolute;left:399px;top:390px;height:23px;line-height:23px;font-size:16px;font-weight:400;color:#000;white-space:nowrap">2000</div><div style="position:absolute;left:593px;top:390px;height:23px;line-height:23px;font-size:16px;font-weight:400;color:#000;white-space:nowrap">=B7*0,18</div><div style="position:absolute;left:787px;top:390px;height:23px;line-height:23px;font-size:16px;font-weight:400;color:#000;white-space:nowrap">1500</div><div style="position:absolute;left:981px;top:390px;height:23px;line-height:23px;font-size:16px;font-weight:400;color:#000;white-space:nowrap">=D7-B7</div><div style="position:absolute;left:38px;top:414px;height:23px;line-height:23px;font-size:16px;font-weight:400;color:#000;white-space:nowrap">Depreciation</div><div style="position:absolute;left:399px;top:414px;height:23px;line-height:23px;font-size:16px;font-weight:400;color:#000;white-space:nowrap">1000</div><div style="position:absolute;left:593px;top:414px;height:23px;line-height:23px;font-size:16px;font-weight:400;color:#000;white-space:nowrap">=B8*0,18</div><div style="position:absolute;left:787px;top:414px;height:23px;line-height:23px;font-size:16px;font-weight:400;color:#000;white-space:nowrap">1000</div><div style="position:absolute;left:981px;top:414px;height:23px;line-height:23px;font-size:16px;font-weight:400;color:#000;white-space:nowrap">=D8-B8</div><div style="position:absolute;left:38px;top:438px;height:23px;line-height:23px;font-size:16px;font-weight:400;color:#000;white-space:nowrap">Dues and subscriptions</div><div style="position:absolute;left:399px;top:438px;height:23px;line-height:23px;font-size:16px;font-weight:400;color:#000;white-space:nowrap">500</div><div style="position:absolute;left:593px;top:438px;height:23px;line-height:23px;font-size:16px;font-weight:400;color:#000;white-space:nowrap">=B9*0,18</div><div style="position:absolute;left:787px;top:438px;height:23px;line-height:23px;font-size:16px;font-weight:400;color:#000;white-space:nowrap">525</div><div style="position:absolute;left:981px;top:438px;height:23px;line-height:23px;font-size:16px;font-weight:400;color:#000;white-space:nowrap">=D9-B9</div><div style="position:absolute;left:38px;top:462px;height:23px;line-height:23px;font-size:16px;font-weight:400;color:#000;white-space:nowrap">Insurance</div><div style="position:absolute;left:399px;top:462px;height:23px;line-height:23px;font-size:16px;font-weight:400;color:#000;white-space:nowrap">1300</div><div style="position:absolute;left:593px;top:462px;height:23px;line-height:23px;font-size:16px;font-weight:400;color:#000;white-space:nowrap">=B10*0,18</div><div style="position:absolute;left:787px;top:462px;height:23px;line-height:23px;font-size:16px;font-weight:400;color:#000;white-space:nowrap">1275</div><div style="position:absolute;left:981px;top:462px;height:23px;line-height:23px;font-size:16px;font-weight:400;color:#000;white-space:nowrap">=D10-B10</div><div style="position:absolute;left:38px;top:486px;height:23px;line-height:23px;font-size:16px;font-weight:400;color:#000;white-space:nowrap">Interest</div><div style="position:absolute;left:399px;top:486px;height:23px;line-height:23px;font-size:16px;font-weight:400;color:#000;white-space:nowrap">2000</div><div style="position:absolute;left:593px;top:486px;height:23px;line-height:23px;font-size:16px;font-weight:400;color:#000;white-space:nowrap">=B11*0,18</div><div style="position:absolute;left:787px;top:486px;height:23px;line-height:23px;font-size:16px;font-weight:400;color:#000;white-space:nowrap">2200</div><div style="position:absolute;left:981px;top:486px;height:23px;line-height:23px;font-size:16px;font-weight:400;color:#000;white-space:nowrap">=D11-B11</div><div style="position:absolute;left:38px;top:510px;height:23px;line-height:23px;font-size:16px;font-weight:400;color:#000;white-space:nowrap">Legal and auditing</div><div style="position:absolute;left:399px;top:510px;height:23px;line-height:23px;font-size:16px;font-weight:400;color:#000;white-space:nowrap">1000</div><div style="position:absolute;left:593px;top:510px;height:23px;line-height:23px;font-size:16px;font-weight:400;color:#000;white-space:nowrap">=B12*0,18</div><div style="position:absolute;left:787px;top:510px;height:23px;line-height:23px;font-size:16px;font-weight:400;color:#000;white-space:nowrap">800</div><div style="position:absolute;left:981px;top:510px;height:23px;line-height:23px;font-size:16px;font-weight:400;color:#000;white-space:nowrap">=D12-B12</div><div style="position:absolute;left:38px;top:534px;height:23px;line-height:23px;font-size:16px;font-weight:400;color:#000;white-space:nowrap">Maintenance and repairs</div><div style="position:absolute;left:399px;top:534px;height:23px;line-height:23px;font-size:16px;font-weight:400;color:#000;white-space:nowrap">4500</div><div style="position:absolute;left:593px;top:534px;height:23px;line-height:23px;font-size:16px;font-weight:400;color:#000;white-space:nowrap">=B13*0,18</div><div style="position:absolute;left:787px;top:534px;height:23px;line-height:23px;font-size:16px;font-weight:400;color:#000;white-space:nowrap">4600</div><div style="position:absolute;left:981px;top:534px;height:23px;line-height:23px;font-size:16px;font-weight:400;color:#000;white-space:nowrap">=D13-B13</div><div style="position:absolute;left:38px;top:558px;height:23px;line-height:23px;font-size:16px;font-weight:400;color:#000;white-space:nowrap">Office supplies</div><div style="position:absolute;left:399px;top:558px;height:23px;line-height:23px;font-size:16px;font-weight:400;color:#000;white-space:nowrap">800</div><div style="position:absolute;left:593px;top:558px;height:23px;line-height:23px;font-size:16px;font-weight:400;color:#000;white-space:nowrap">=B14*0,18</div><div style="position:absolute;left:787px;top:558px;height:23px;line-height:23px;font-size:16px;font-weight:400;color:#000;white-space:nowrap">750</div><div style="position:absolute;left:981px;top:558px;height:23px;line-height:23px;font-size:16px;font-weight:400;color:#000;white-space:nowrap">=D14-B14</div><div style="position:absolute;left:38px;top:582px;height:23px;line-height:23px;font-size:16px;font-weight:400;color:#000;white-space:nowrap">Postage</div><div style="position:absolute;left:399px;top:582px;height:23px;line-height:23px;font-size:16px;font-weight:400;color:#000;white-space:nowrap">400</div><div style="position:absolute;left:593px;top:582px;height:23px;line-height:23px;font-size:16px;font-weight:400;color:#000;white-space:nowrap">=B15*0,18</div><div style="position:absolute;left:787px;top:582px;height:23px;line-height:23px;font-size:16px;font-weight:400;color:#000;white-space:nowrap">350</div><div style="position:absolute;left:981px;top:582px;height:23px;line-height:23px;font-size:16px;font-weight:400;color:#000;white-space:nowrap">=D15-B15</div><div style="position:absolute;left:38px;top:606px;height:23px;line-height:23px;font-size:16px;font-weight:400;color:#000;white-space:nowrap">Rent or mortgage</div><div style="position:absolute;left:399px;top:606px;height:23px;line-height:23px;font-size:16px;font-weight:400;color:#000;white-space:nowrap">4100</div><div style="position:absolute;left:593px;top:606px;height:23px;line-height:23px;font-size:16px;font-weight:400;color:#000;white-space:nowrap">=B16*0,18</div><div style="position:absolute;left:787px;top:606px;height:23px;line-height:23px;font-size:16px;font-weight:400;color:#000;white-space:nowrap">4500</div><div style="position:absolute;left:981px;top:606px;height:23px;line-height:23px;font-size:16px;font-weight:400;color:#000;white-space:nowrap">=D16-B16</div><div style="position:absolute;left:38px;top:630px;height:23px;line-height:23px;font-size:16px;font-weight:400;color:#000;white-space:nowrap">Sales</div><div style="position:absolute;left:399px;top:630px;height:23px;line-height:23px;font-size:16px;font-weight:400;color:#000;white-space:nowrap">350</div><div style="position:absolute;left:593px;top:630px;height:23px;line-height:23px;font-size:16px;font-weight:400;color:#000;white-space:nowrap">=B17*0,18</div><div style="position:absolute;left:787px;top:630px;height:23px;line-height:23px;font-size:16px;font-weight:400;color:#000;white-space:nowrap">400</div><div style="position:absolute;left:981px;top:630px;height:23px;line-height:23px;font-size:16px;font-weight:400;color:#000;white-space:nowrap">=D17-B17</div><div style="position:absolute;left:38px;top:654px;height:23px;line-height:23px;font-size:16px;font-weight:400;color:#000;white-space:nowrap">Shipping and storage</div><div style="position:absolute;left:399px;top:654px;height:23px;line-height:23px;font-size:16px;font-weight:400;color:#000;white-space:nowrap">900</div><div style="position:absolute;left:593px;top:654px;height:23px;line-height:23px;font-size:16px;font-weight:400;color:#000;white-space:nowrap">=B18*0,18</div><div style="position:absolute;left:787px;top:654px;height:23px;line-height:23px;font-size:16px;font-weight:400;color:#000;white-space:nowrap">840</div><div style="position:absolute;left:981px;top:654px;height:23px;line-height:23px;font-size:16px;font-weight:400;color:#000;white-space:nowrap">=D18-B18</div><div style="position:absolute;left:38px;top:678px;height:23px;line-height:23px;font-size:16px;font-weight:400;color:#000;white-space:nowrap">Supplies</div><div style="position:absolute;left:399px;top:678px;height:23px;line-height:23px;font-size:16px;font-weight:400;color:#000;white-space:nowrap">5000</div><div style="position:absolute;left:593px;top:678px;height:23px;line-height:23px;font-size:16px;font-weight:400;color:#000;white-space:nowrap">=B19*0,18</div><div style="position:absolute;left:787px;top:678px;height:23px;line-height:23px;font-size:16px;font-weight:400;color:#000;white-space:nowrap">4500</div><div style="position:absolute;left:981px;top:678px;height:23px;line-height:23px;font-size:16px;font-weight:400;color:#000;white-space:nowrap">=D19-B19</div><div style="position:absolute;left:38px;top:702px;height:23px;line-height:23px;font-size:16px;font-weight:400;color:#000;white-space:nowrap">Taxes</div><div style="position:absolute;left:399px;top:702px;height:23px;line-height:23px;font-size:16px;font-weight:400;color:#000;white-space:nowrap">3000</div><div style="position:absolute;left:593px;top:702px;height:23px;line-height:23px;font-size:16px;font-weight:400;color:#000;white-space:nowrap">=B20*0,18</div><div style="position:absolute;left:787px;top:702px;height:23px;line-height:23px;font-size:16px;font-weight:400;color:#000;white-space:nowrap">3200</div><div style="position:absolute;left:981px;top:702px;height:23px;line-height:23px;font-size:16px;font-weight:400;color:#000;white-space:nowrap">=D20-B20</div><div style="position:absolute;left:38px;top:726px;height:23px;line-height:23px;font-size:16px;font-weight:400;color:#000;white-space:nowrap">Telephone</div><div style="position:absolute;left:399px;top:726px;height:23px;line-height:23px;font-size:16px;font-weight:400;color:#000;white-space:nowrap">250</div><div style="position:absolute;left:593px;top:726px;height:23px;line-height:23px;font-size:16px;font-weight:400;color:#000;white-space:nowrap">=B21*0,18</div><div style="position:absolute;left:787px;top:726px;height:23px;line-height:23px;font-size:16px;font-weight:400;color:#000;white-space:nowrap">280</div><div style="position:absolute;left:981px;top:726px;height:23px;line-height:23px;font-size:16px;font-weight:400;color:#000;white-space:nowrap">=D21-B21</div><div style="position:absolute;left:38px;top:750px;height:23px;line-height:23px;font-size:16px;font-weight:400;color:#000;white-space:nowrap">Utilities</div><div style="position:absolute;left:399px;top:750px;height:23px;line-height:23px;font-size:16px;font-weight:400;color:#000;white-space:nowrap">1400</div><div style="position:absolute;left:593px;top:750px;height:23px;line-height:23px;font-size:16px;font-weight:400;color:#000;white-space:nowrap">=B22*0,18</div><div style="position:absolute;left:787px;top:750px;height:23px;line-height:23px;font-size:16px;font-weight:400;color:#000;white-space:nowrap">1385</div><div style="position:absolute;left:981px;top:750px;height:23px;line-height:23px;font-size:16px;font-weight:400;color:#000;white-space:nowrap">=D22-B22</div><div style="position:absolute;left:38px;top:774px;height:23px;line-height:23px;font-size:16px;font-weight:400;color:#000;white-space:nowrap">Other</div><div style="position:absolute;left:399px;top:774px;height:23px;line-height:23px;font-size:16px;font-weight:400;color:#000;white-space:nowrap">1000</div><div style="position:absolute;left:593px;top:774px;height:23px;line-height:23px;font-size:16px;font-weight:400;color:#000;white-space:nowrap">=B23*0,18</div><div style="position:absolute;left:787px;top:774px;height:23px;line-height:23px;font-size:16px;font-weight:400;color:#000;white-space:nowrap">750</div><div style="position:absolute;left:981px;top:774px;height:23px;line-height:23px;font-size:16px;font-weight:400;color:#000;white-space:nowrap">=D23-B23+30</div><div style="position:absolute;left:38px;top:798px;height:23px;line-height:23px;font-size:16px;font-weight:700;color:#000;white-space:nowrap">Total operating expenses</div><div style="position:absolute;left:399px;top:798px;height:23px;line-height:23px;font-size:16px;font-weight:700;color:#000;white-space:nowrap">=SUM(B4:B23)</div><div style="position:absolute;left:593px;top:798px;height:23px;line-height:23px;font-size:16px;font-weight:700;color:#000;white-space:nowrap">=SUM(C4:C23)</div><div style="position:absolute;left:787px;top:798px;height:23px;line-height:23px;font-size:16px;font-weight:700;color:#000;white-space:nowrap">=SUM(D4:D23)</div><div style="position:absolute;left:981px;top:798px;height:23px;line-height:23px;font-size:16px;font-weight:700;color:#000;white-space:nowrap">=SUM(E4:E23)</div><div style="position:absolute;left:0px;top:898px;width:1600px;height:39px;background:#e3e3e3"></div><div style="position:absolute;left:0px;top:936px;width:1600px;height:1px;background:#f4f4f4"></div><svg style="position:absolute;left:29px;top:909px" width="12" height="17" viewBox="0 0 12 17" fill="none" stroke-linecap="butt"><path d="M10 1 L2 8.5 L10 16" stroke="#8a8a8a" stroke-width="1.3"/></svg><svg style="position:absolute;left:69px;top:909px" width="12" height="17" viewBox="0 0 12 17" fill="none" stroke-linecap="butt"><path d="M2 1 L10 8.5 L2 16" stroke="#8a8a8a" stroke-width="1.3"/></svg><div style="position:absolute;left:141px;top:904px;width:84px;height:30px;background:#2e6b94;border-radius:5px"></div><div style="position:absolute;left:-117.0px;width:600px;text-align:center;top:907.80px;height:24px;line-height:24px;font-size:17.8px;font-weight:400;color:#fff;white-space:nowrap;">Content</div><div style="position:absolute;left:236px;top:904px;width:95px;height:30px;background:#2e6b94;border-radius:5px"></div><div style="position:absolute;left:-16.5px;width:600px;text-align:center;top:907.80px;height:24px;line-height:24px;font-size:17.8px;font-weight:400;color:#fff;white-space:nowrap;">Summary</div><div style="position:absolute;left:342px;top:904px;width:79px;height:30px;background:#2e6b94;border-radius:5px"></div><div style="position:absolute;left:81.5px;width:600px;text-align:center;top:907.80px;height:24px;line-height:24px;font-size:17.8px;font-weight:400;color:#fff;white-space:nowrap;">Income</div><div style="position:absolute;left:432px;top:904px;width:92px;height:30px;background:#2e6b94;border-radius:5px"></div><div style="position:absolute;left:178.0px;width:600px;text-align:center;top:907.80px;height:24px;line-height:24px;font-size:17.8px;font-weight:400;color:#fff;white-space:nowrap;">Expenses</div><div style="position:absolute;left:535px;top:904px;width:98px;height:30px;background:#2e6b94;border-radius:5px"></div><div style="position:absolute;left:284.0px;width:600px;text-align:center;top:907.80px;height:24px;line-height:24px;font-size:17.8px;font-weight:400;color:#fff;white-space:nowrap;">Personnel</div><div style="position:absolute;left:230px;top:910px;width:1px;height:18px;background:#cfcfcf"></div><div style="position:absolute;left:336px;top:910px;width:1px;height:18px;background:#cfcfcf"></div><div style="position:absolute;left:426px;top:910px;width:1px;height:18px;background:#cfcfcf"></div><div style="position:absolute;left:529px;top:910px;width:1px;height:18px;background:#cfcfcf"></div><div style="position:absolute;left:639px;top:910px;width:1px;height:18px;background:#cfcfcf"></div><div style="position:absolute;left:749px;top:910px;width:1px;height:18px;background:#cfcfcf"></div><div style="position:absolute;left:832px;top:910px;width:1px;height:18px;background:#cfcfcf"></div><div style="position:absolute;left:644px;top:898px;width:100px;height:35px;background:linear-gradient(#ffffff 0%,#eef3f7 25%,#c9dae6 70%,#b4cddd 100%);border-radius:0 0 6px 6px"></div><div style="position:absolute;left:394px;width:600px;text-align:center;top:905.00px;height:23px;line-height:23px;font-size:17px;font-weight:700;color:#242424;white-space:nowrap;letter-spacing:-0.15px">Operating</div><div style="position:absolute;left:654px;top:929px;width:80px;height:2px;background:#107c41"></div><div style="position:absolute;left:490.5px;width:600px;text-align:center;top:908.30px;height:23px;line-height:23px;font-size:16.5px;font-weight:400;color:#242424;white-space:nowrap;">Sheet1</div><svg style="position:absolute;left:884px;top:910px" width="17" height="17" viewBox="0 0 17 17" fill="none" stroke-linecap="butt"><path d="M8.3 1 V15 M1.2 8 H15.3" stroke="#2e2e2e" stroke-width="1.8"/></svg><div style="position:absolute;left:1155px;top:913px;width:3px;height:3px;background:#333"></div><div style="position:absolute;left:1155px;top:918px;width:3px;height:3px;background:#333"></div><div style="position:absolute;left:1155px;top:923px;width:3px;height:3px;background:#333"></div><div style="position:absolute;left:1176px;top:908px;width:400px;height:21px;background:#f7f7f7;border-radius:10.5px"></div><svg style="position:absolute;left:1181px;top:912px" width="10" height="14" viewBox="0 0 10 14" fill="none" stroke-linecap="butt"><path d="M9 1 L2 7 L9 13 Z" fill="#777"/></svg><div style="position:absolute;left:1197px;top:913px;width:400px;height:11px;background:#8a8a8a;border-radius:5.5px"></div></div>
</body></html>
